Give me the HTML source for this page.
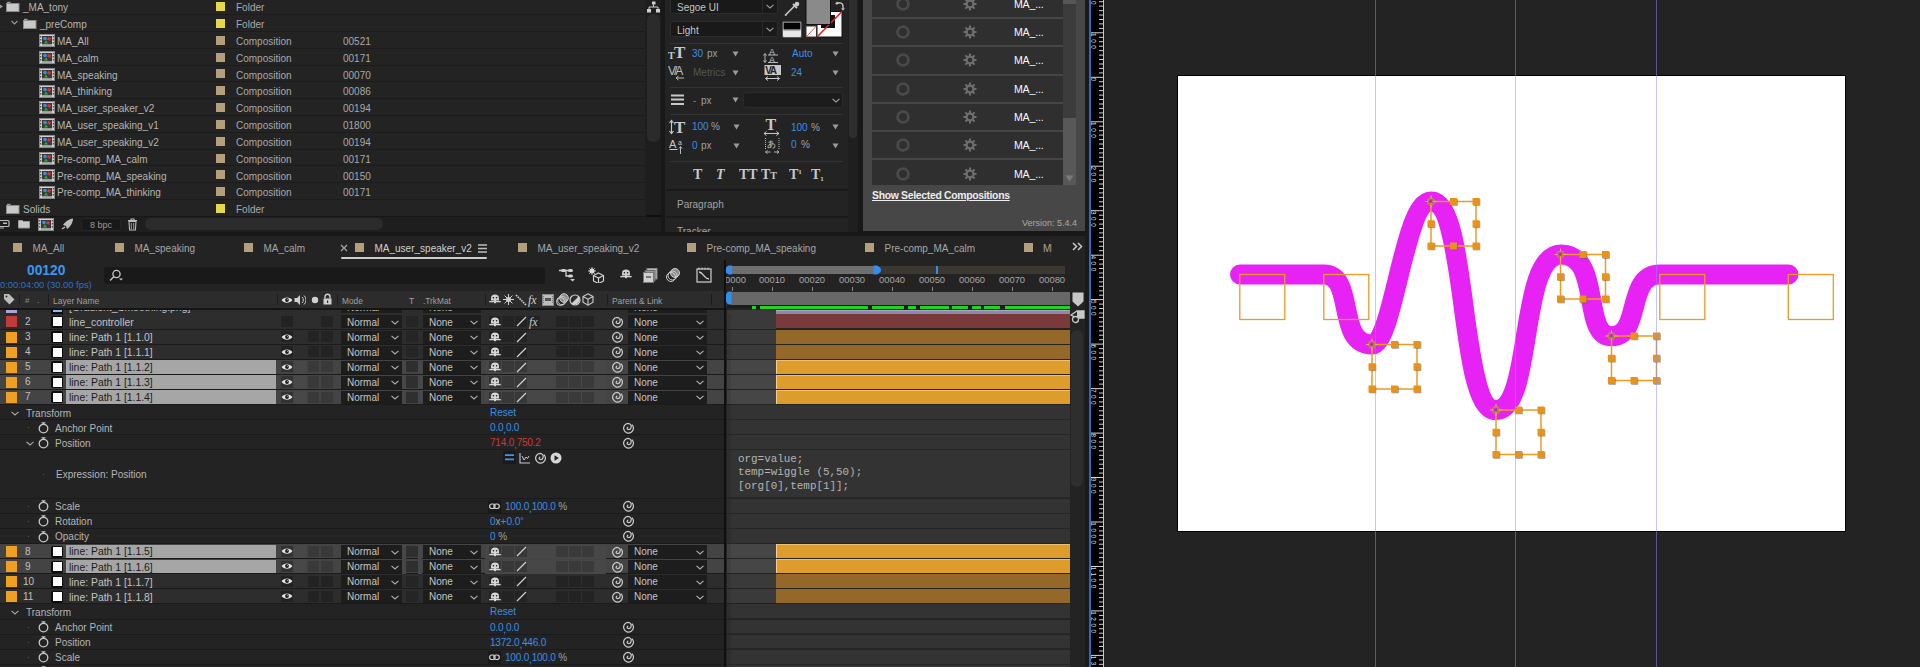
<!DOCTYPE html>
<html><head><meta charset="utf-8"><style>
html,body{margin:0;padding:0;}
body{width:1920px;height:667px;overflow:hidden;background:#232323;position:relative;font-family:"Liberation Sans",sans-serif;}
div{position:absolute;}
</style></head><body>
<div style="left:0px;top:0px;width:646px;height:217px;background:#232323;"></div>
<div style="left:0px;top:14px;width:646px;height:1px;background:#1c1c1c;"></div>
<svg style="position:absolute;left:6px;top:1px;" width="14" height="12" viewBox="0 0 14 12"><rect x="0.5" y="2.5" width="12.5" height="8" fill="#c9c9c9" stroke="#8a8a8a" stroke-width="1"/><rect x="1" y="0.8" width="3.5" height="1.5" fill="#9a9a9a"/></svg>
<div style="left:23px;top:3.25px;font-size:10px;line-height:10px;color:#b4b4b4;font-weight:normal;font-family:'Liberation Sans', sans-serif;white-space:nowrap;">_MA_tony</div>
<div style="left:216px;top:2px;width:9px;height:9px;background:#e6d84a;"></div>
<div style="left:236px;top:3.25px;font-size:10px;line-height:10px;color:#a8a8a8;font-weight:normal;font-family:'Liberation Sans', sans-serif;white-space:nowrap;">Folder</div>
<div style="left:0px;top:31px;width:646px;height:1px;background:#1c1c1c;"></div>
<svg style="position:absolute;left:23px;top:18px;" width="14" height="12" viewBox="0 0 14 12"><rect x="0.5" y="2.5" width="12.5" height="8" fill="#c9c9c9" stroke="#8a8a8a" stroke-width="1"/><rect x="1" y="0.8" width="3.5" height="1.5" fill="#9a9a9a"/></svg>
<div style="left:40px;top:20.08px;font-size:10px;line-height:10px;color:#b4b4b4;font-weight:normal;font-family:'Liberation Sans', sans-serif;white-space:nowrap;">_preComp</div>
<div style="left:216px;top:19px;width:9px;height:9px;background:#e6d84a;"></div>
<div style="left:236px;top:20.08px;font-size:10px;line-height:10px;color:#a8a8a8;font-weight:normal;font-family:'Liberation Sans', sans-serif;white-space:nowrap;">Folder</div>
<div style="left:0px;top:48px;width:646px;height:1px;background:#1c1c1c;"></div>
<svg style="position:absolute;left:39px;top:34px;" width="16" height="13" viewBox="0 0 16 13"><rect x="0.5" y="0.5" width="15" height="12" fill="#cfcfcf" stroke="#8a8a8a"/><rect x="3" y="2" width="10" height="8" fill="#3a3a3a"/><rect x="1" y="2" width="1.3" height="1.5" fill="#555"/><rect x="1" y="5" width="1.3" height="1.5" fill="#555"/><rect x="1" y="8" width="1.3" height="1.5" fill="#555"/><rect x="13.7" y="2" width="1.3" height="1.5" fill="#555"/><rect x="13.7" y="5" width="1.3" height="1.5" fill="#555"/><rect x="13.7" y="8" width="1.3" height="1.5" fill="#555"/><circle cx="6" cy="4.5" r="1.8" fill="#3b8ee8"/><rect x="8.5" y="3.3" width="3.2" height="3" fill="#e03030" transform="rotate(20 10 4.8)"/><path d="M5 9.5l2-3.2 2 3.2z" fill="#20b030"/><rect x="3" y="10.3" width="10" height="1.2" fill="#888"/></svg>
<div style="left:57px;top:36.91px;font-size:10px;line-height:10px;color:#b4b4b4;font-weight:normal;font-family:'Liberation Sans', sans-serif;white-space:nowrap;">MA_All</div>
<div style="left:216px;top:36px;width:9px;height:9px;background:#b49f7c;"></div>
<div style="left:236px;top:36.91px;font-size:10px;line-height:10px;color:#a8a8a8;font-weight:normal;font-family:'Liberation Sans', sans-serif;white-space:nowrap;">Composition</div>
<div style="left:343px;top:36.91px;font-size:10px;line-height:10px;color:#a8a8a8;font-weight:normal;font-family:'Liberation Sans', sans-serif;white-space:nowrap;">00521</div>
<div style="left:0px;top:65px;width:646px;height:1px;background:#1c1c1c;"></div>
<svg style="position:absolute;left:39px;top:51px;" width="16" height="13" viewBox="0 0 16 13"><rect x="0.5" y="0.5" width="15" height="12" fill="#cfcfcf" stroke="#8a8a8a"/><rect x="3" y="2" width="10" height="8" fill="#3a3a3a"/><rect x="1" y="2" width="1.3" height="1.5" fill="#555"/><rect x="1" y="5" width="1.3" height="1.5" fill="#555"/><rect x="1" y="8" width="1.3" height="1.5" fill="#555"/><rect x="13.7" y="2" width="1.3" height="1.5" fill="#555"/><rect x="13.7" y="5" width="1.3" height="1.5" fill="#555"/><rect x="13.7" y="8" width="1.3" height="1.5" fill="#555"/><circle cx="6" cy="4.5" r="1.8" fill="#3b8ee8"/><rect x="8.5" y="3.3" width="3.2" height="3" fill="#e03030" transform="rotate(20 10 4.8)"/><path d="M5 9.5l2-3.2 2 3.2z" fill="#20b030"/><rect x="3" y="10.3" width="10" height="1.2" fill="#888"/></svg>
<div style="left:57px;top:53.74px;font-size:10px;line-height:10px;color:#b4b4b4;font-weight:normal;font-family:'Liberation Sans', sans-serif;white-space:nowrap;">MA_calm</div>
<div style="left:216px;top:53px;width:9px;height:9px;background:#b49f7c;"></div>
<div style="left:236px;top:53.74px;font-size:10px;line-height:10px;color:#a8a8a8;font-weight:normal;font-family:'Liberation Sans', sans-serif;white-space:nowrap;">Composition</div>
<div style="left:343px;top:53.74px;font-size:10px;line-height:10px;color:#a8a8a8;font-weight:normal;font-family:'Liberation Sans', sans-serif;white-space:nowrap;">00171</div>
<div style="left:0px;top:81px;width:646px;height:1px;background:#1c1c1c;"></div>
<svg style="position:absolute;left:39px;top:68px;" width="16" height="13" viewBox="0 0 16 13"><rect x="0.5" y="0.5" width="15" height="12" fill="#cfcfcf" stroke="#8a8a8a"/><rect x="3" y="2" width="10" height="8" fill="#3a3a3a"/><rect x="1" y="2" width="1.3" height="1.5" fill="#555"/><rect x="1" y="5" width="1.3" height="1.5" fill="#555"/><rect x="1" y="8" width="1.3" height="1.5" fill="#555"/><rect x="13.7" y="2" width="1.3" height="1.5" fill="#555"/><rect x="13.7" y="5" width="1.3" height="1.5" fill="#555"/><rect x="13.7" y="8" width="1.3" height="1.5" fill="#555"/><circle cx="6" cy="4.5" r="1.8" fill="#3b8ee8"/><rect x="8.5" y="3.3" width="3.2" height="3" fill="#e03030" transform="rotate(20 10 4.8)"/><path d="M5 9.5l2-3.2 2 3.2z" fill="#20b030"/><rect x="3" y="10.3" width="10" height="1.2" fill="#888"/></svg>
<div style="left:57px;top:70.57px;font-size:10px;line-height:10px;color:#b4b4b4;font-weight:normal;font-family:'Liberation Sans', sans-serif;white-space:nowrap;">MA_speaking</div>
<div style="left:216px;top:69px;width:9px;height:9px;background:#b49f7c;"></div>
<div style="left:236px;top:70.57px;font-size:10px;line-height:10px;color:#a8a8a8;font-weight:normal;font-family:'Liberation Sans', sans-serif;white-space:nowrap;">Composition</div>
<div style="left:343px;top:70.57px;font-size:10px;line-height:10px;color:#a8a8a8;font-weight:normal;font-family:'Liberation Sans', sans-serif;white-space:nowrap;">00070</div>
<div style="left:0px;top:98px;width:646px;height:1px;background:#1c1c1c;"></div>
<svg style="position:absolute;left:39px;top:85px;" width="16" height="13" viewBox="0 0 16 13"><rect x="0.5" y="0.5" width="15" height="12" fill="#cfcfcf" stroke="#8a8a8a"/><rect x="3" y="2" width="10" height="8" fill="#3a3a3a"/><rect x="1" y="2" width="1.3" height="1.5" fill="#555"/><rect x="1" y="5" width="1.3" height="1.5" fill="#555"/><rect x="1" y="8" width="1.3" height="1.5" fill="#555"/><rect x="13.7" y="2" width="1.3" height="1.5" fill="#555"/><rect x="13.7" y="5" width="1.3" height="1.5" fill="#555"/><rect x="13.7" y="8" width="1.3" height="1.5" fill="#555"/><circle cx="6" cy="4.5" r="1.8" fill="#3b8ee8"/><rect x="8.5" y="3.3" width="3.2" height="3" fill="#e03030" transform="rotate(20 10 4.8)"/><path d="M5 9.5l2-3.2 2 3.2z" fill="#20b030"/><rect x="3" y="10.3" width="10" height="1.2" fill="#888"/></svg>
<div style="left:57px;top:87.40px;font-size:10px;line-height:10px;color:#b4b4b4;font-weight:normal;font-family:'Liberation Sans', sans-serif;white-space:nowrap;">MA_thinking</div>
<div style="left:216px;top:86px;width:9px;height:9px;background:#b49f7c;"></div>
<div style="left:236px;top:87.40px;font-size:10px;line-height:10px;color:#a8a8a8;font-weight:normal;font-family:'Liberation Sans', sans-serif;white-space:nowrap;">Composition</div>
<div style="left:343px;top:87.40px;font-size:10px;line-height:10px;color:#a8a8a8;font-weight:normal;font-family:'Liberation Sans', sans-serif;white-space:nowrap;">00086</div>
<div style="left:0px;top:115px;width:646px;height:1px;background:#1c1c1c;"></div>
<svg style="position:absolute;left:39px;top:101px;" width="16" height="13" viewBox="0 0 16 13"><rect x="0.5" y="0.5" width="15" height="12" fill="#cfcfcf" stroke="#8a8a8a"/><rect x="3" y="2" width="10" height="8" fill="#3a3a3a"/><rect x="1" y="2" width="1.3" height="1.5" fill="#555"/><rect x="1" y="5" width="1.3" height="1.5" fill="#555"/><rect x="1" y="8" width="1.3" height="1.5" fill="#555"/><rect x="13.7" y="2" width="1.3" height="1.5" fill="#555"/><rect x="13.7" y="5" width="1.3" height="1.5" fill="#555"/><rect x="13.7" y="8" width="1.3" height="1.5" fill="#555"/><circle cx="6" cy="4.5" r="1.8" fill="#3b8ee8"/><rect x="8.5" y="3.3" width="3.2" height="3" fill="#e03030" transform="rotate(20 10 4.8)"/><path d="M5 9.5l2-3.2 2 3.2z" fill="#20b030"/><rect x="3" y="10.3" width="10" height="1.2" fill="#888"/></svg>
<div style="left:57px;top:104.23px;font-size:10px;line-height:10px;color:#b4b4b4;font-weight:normal;font-family:'Liberation Sans', sans-serif;white-space:nowrap;">MA_user_speaker_v2</div>
<div style="left:216px;top:103px;width:9px;height:9px;background:#b49f7c;"></div>
<div style="left:236px;top:104.23px;font-size:10px;line-height:10px;color:#a8a8a8;font-weight:normal;font-family:'Liberation Sans', sans-serif;white-space:nowrap;">Composition</div>
<div style="left:343px;top:104.23px;font-size:10px;line-height:10px;color:#a8a8a8;font-weight:normal;font-family:'Liberation Sans', sans-serif;white-space:nowrap;">00194</div>
<div style="left:0px;top:132px;width:646px;height:1px;background:#1c1c1c;"></div>
<svg style="position:absolute;left:39px;top:118px;" width="16" height="13" viewBox="0 0 16 13"><rect x="0.5" y="0.5" width="15" height="12" fill="#cfcfcf" stroke="#8a8a8a"/><rect x="3" y="2" width="10" height="8" fill="#3a3a3a"/><rect x="1" y="2" width="1.3" height="1.5" fill="#555"/><rect x="1" y="5" width="1.3" height="1.5" fill="#555"/><rect x="1" y="8" width="1.3" height="1.5" fill="#555"/><rect x="13.7" y="2" width="1.3" height="1.5" fill="#555"/><rect x="13.7" y="5" width="1.3" height="1.5" fill="#555"/><rect x="13.7" y="8" width="1.3" height="1.5" fill="#555"/><circle cx="6" cy="4.5" r="1.8" fill="#3b8ee8"/><rect x="8.5" y="3.3" width="3.2" height="3" fill="#e03030" transform="rotate(20 10 4.8)"/><path d="M5 9.5l2-3.2 2 3.2z" fill="#20b030"/><rect x="3" y="10.3" width="10" height="1.2" fill="#888"/></svg>
<div style="left:57px;top:121.06px;font-size:10px;line-height:10px;color:#b4b4b4;font-weight:normal;font-family:'Liberation Sans', sans-serif;white-space:nowrap;">MA_user_speaking_v1</div>
<div style="left:216px;top:120px;width:9px;height:9px;background:#b49f7c;"></div>
<div style="left:236px;top:121.06px;font-size:10px;line-height:10px;color:#a8a8a8;font-weight:normal;font-family:'Liberation Sans', sans-serif;white-space:nowrap;">Composition</div>
<div style="left:343px;top:121.06px;font-size:10px;line-height:10px;color:#a8a8a8;font-weight:normal;font-family:'Liberation Sans', sans-serif;white-space:nowrap;">01800</div>
<div style="left:0px;top:149px;width:646px;height:1px;background:#1c1c1c;"></div>
<svg style="position:absolute;left:39px;top:135px;" width="16" height="13" viewBox="0 0 16 13"><rect x="0.5" y="0.5" width="15" height="12" fill="#cfcfcf" stroke="#8a8a8a"/><rect x="3" y="2" width="10" height="8" fill="#3a3a3a"/><rect x="1" y="2" width="1.3" height="1.5" fill="#555"/><rect x="1" y="5" width="1.3" height="1.5" fill="#555"/><rect x="1" y="8" width="1.3" height="1.5" fill="#555"/><rect x="13.7" y="2" width="1.3" height="1.5" fill="#555"/><rect x="13.7" y="5" width="1.3" height="1.5" fill="#555"/><rect x="13.7" y="8" width="1.3" height="1.5" fill="#555"/><circle cx="6" cy="4.5" r="1.8" fill="#3b8ee8"/><rect x="8.5" y="3.3" width="3.2" height="3" fill="#e03030" transform="rotate(20 10 4.8)"/><path d="M5 9.5l2-3.2 2 3.2z" fill="#20b030"/><rect x="3" y="10.3" width="10" height="1.2" fill="#888"/></svg>
<div style="left:57px;top:137.89px;font-size:10px;line-height:10px;color:#b4b4b4;font-weight:normal;font-family:'Liberation Sans', sans-serif;white-space:nowrap;">MA_user_speaking_v2</div>
<div style="left:216px;top:137px;width:9px;height:9px;background:#b49f7c;"></div>
<div style="left:236px;top:137.89px;font-size:10px;line-height:10px;color:#a8a8a8;font-weight:normal;font-family:'Liberation Sans', sans-serif;white-space:nowrap;">Composition</div>
<div style="left:343px;top:137.89px;font-size:10px;line-height:10px;color:#a8a8a8;font-weight:normal;font-family:'Liberation Sans', sans-serif;white-space:nowrap;">00194</div>
<div style="left:0px;top:165px;width:646px;height:1px;background:#1c1c1c;"></div>
<svg style="position:absolute;left:39px;top:152px;" width="16" height="13" viewBox="0 0 16 13"><rect x="0.5" y="0.5" width="15" height="12" fill="#cfcfcf" stroke="#8a8a8a"/><rect x="3" y="2" width="10" height="8" fill="#3a3a3a"/><rect x="1" y="2" width="1.3" height="1.5" fill="#555"/><rect x="1" y="5" width="1.3" height="1.5" fill="#555"/><rect x="1" y="8" width="1.3" height="1.5" fill="#555"/><rect x="13.7" y="2" width="1.3" height="1.5" fill="#555"/><rect x="13.7" y="5" width="1.3" height="1.5" fill="#555"/><rect x="13.7" y="8" width="1.3" height="1.5" fill="#555"/><circle cx="6" cy="4.5" r="1.8" fill="#3b8ee8"/><rect x="8.5" y="3.3" width="3.2" height="3" fill="#e03030" transform="rotate(20 10 4.8)"/><path d="M5 9.5l2-3.2 2 3.2z" fill="#20b030"/><rect x="3" y="10.3" width="10" height="1.2" fill="#888"/></svg>
<div style="left:57px;top:154.72px;font-size:10px;line-height:10px;color:#b4b4b4;font-weight:normal;font-family:'Liberation Sans', sans-serif;white-space:nowrap;">Pre-comp_MA_calm</div>
<div style="left:216px;top:154px;width:9px;height:9px;background:#b49f7c;"></div>
<div style="left:236px;top:154.72px;font-size:10px;line-height:10px;color:#a8a8a8;font-weight:normal;font-family:'Liberation Sans', sans-serif;white-space:nowrap;">Composition</div>
<div style="left:343px;top:154.72px;font-size:10px;line-height:10px;color:#a8a8a8;font-weight:normal;font-family:'Liberation Sans', sans-serif;white-space:nowrap;">00171</div>
<div style="left:0px;top:182px;width:646px;height:1px;background:#1c1c1c;"></div>
<svg style="position:absolute;left:39px;top:169px;" width="16" height="13" viewBox="0 0 16 13"><rect x="0.5" y="0.5" width="15" height="12" fill="#cfcfcf" stroke="#8a8a8a"/><rect x="3" y="2" width="10" height="8" fill="#3a3a3a"/><rect x="1" y="2" width="1.3" height="1.5" fill="#555"/><rect x="1" y="5" width="1.3" height="1.5" fill="#555"/><rect x="1" y="8" width="1.3" height="1.5" fill="#555"/><rect x="13.7" y="2" width="1.3" height="1.5" fill="#555"/><rect x="13.7" y="5" width="1.3" height="1.5" fill="#555"/><rect x="13.7" y="8" width="1.3" height="1.5" fill="#555"/><circle cx="6" cy="4.5" r="1.8" fill="#3b8ee8"/><rect x="8.5" y="3.3" width="3.2" height="3" fill="#e03030" transform="rotate(20 10 4.8)"/><path d="M5 9.5l2-3.2 2 3.2z" fill="#20b030"/><rect x="3" y="10.3" width="10" height="1.2" fill="#888"/></svg>
<div style="left:57px;top:171.55px;font-size:10px;line-height:10px;color:#b4b4b4;font-weight:normal;font-family:'Liberation Sans', sans-serif;white-space:nowrap;">Pre-comp_MA_speaking</div>
<div style="left:216px;top:170px;width:9px;height:9px;background:#b49f7c;"></div>
<div style="left:236px;top:171.55px;font-size:10px;line-height:10px;color:#a8a8a8;font-weight:normal;font-family:'Liberation Sans', sans-serif;white-space:nowrap;">Composition</div>
<div style="left:343px;top:171.55px;font-size:10px;line-height:10px;color:#a8a8a8;font-weight:normal;font-family:'Liberation Sans', sans-serif;white-space:nowrap;">00150</div>
<div style="left:0px;top:199px;width:646px;height:1px;background:#1c1c1c;"></div>
<svg style="position:absolute;left:39px;top:186px;" width="16" height="13" viewBox="0 0 16 13"><rect x="0.5" y="0.5" width="15" height="12" fill="#cfcfcf" stroke="#8a8a8a"/><rect x="3" y="2" width="10" height="8" fill="#3a3a3a"/><rect x="1" y="2" width="1.3" height="1.5" fill="#555"/><rect x="1" y="5" width="1.3" height="1.5" fill="#555"/><rect x="1" y="8" width="1.3" height="1.5" fill="#555"/><rect x="13.7" y="2" width="1.3" height="1.5" fill="#555"/><rect x="13.7" y="5" width="1.3" height="1.5" fill="#555"/><rect x="13.7" y="8" width="1.3" height="1.5" fill="#555"/><circle cx="6" cy="4.5" r="1.8" fill="#3b8ee8"/><rect x="8.5" y="3.3" width="3.2" height="3" fill="#e03030" transform="rotate(20 10 4.8)"/><path d="M5 9.5l2-3.2 2 3.2z" fill="#20b030"/><rect x="3" y="10.3" width="10" height="1.2" fill="#888"/></svg>
<div style="left:57px;top:188.38px;font-size:10px;line-height:10px;color:#b4b4b4;font-weight:normal;font-family:'Liberation Sans', sans-serif;white-space:nowrap;">Pre-comp_MA_thinking</div>
<div style="left:216px;top:187px;width:9px;height:9px;background:#b49f7c;"></div>
<div style="left:236px;top:188.38px;font-size:10px;line-height:10px;color:#a8a8a8;font-weight:normal;font-family:'Liberation Sans', sans-serif;white-space:nowrap;">Composition</div>
<div style="left:343px;top:188.38px;font-size:10px;line-height:10px;color:#a8a8a8;font-weight:normal;font-family:'Liberation Sans', sans-serif;white-space:nowrap;">00171</div>
<div style="left:0px;top:216px;width:646px;height:1px;background:#1c1c1c;"></div>
<svg style="position:absolute;left:6px;top:203px;" width="14" height="12" viewBox="0 0 14 12"><rect x="0.5" y="2.5" width="12.5" height="8" fill="#c9c9c9" stroke="#8a8a8a" stroke-width="1"/><rect x="1" y="0.8" width="3.5" height="1.5" fill="#9a9a9a"/></svg>
<div style="left:23px;top:205.21px;font-size:10px;line-height:10px;color:#b4b4b4;font-weight:normal;font-family:'Liberation Sans', sans-serif;white-space:nowrap;">Solids</div>
<div style="left:216px;top:204px;width:9px;height:9px;background:#e6d84a;"></div>
<div style="left:236px;top:205.21px;font-size:10px;line-height:10px;color:#a8a8a8;font-weight:normal;font-family:'Liberation Sans', sans-serif;white-space:nowrap;">Folder</div>
<svg style="position:absolute;left:0px;top:4px;" width="4" height="5" viewBox="0 0 4 5"><path d="M0 0.5l3 2-3 2z" fill="#999"/></svg>
<svg style="position:absolute;left:11px;top:20px;" width="8" height="6" viewBox="0 0 8 6"><path d="M0.5 1l3 3 3-3" fill="none" stroke="#9a9a9a" stroke-width="1.1"/></svg>
<div style="left:0px;top:216px;width:646px;height:16px;background:#1e1e1e;"></div>
<div style="left:0px;top:216px;width:646px;height:1px;background:#171717;"></div>
<svg style="position:absolute;left:0px;top:219px;" width="10" height="11" viewBox="0 0 10 11"><rect x="-3" y="1.5" width="12" height="6" rx="1" fill="none" stroke="#bbb" stroke-width="1.2"/><rect x="3" y="3.5" width="4" height="1.5" fill="#bbb"/><path d="M0 9h4" stroke="#aaa"/></svg>
<svg style="position:absolute;left:18px;top:218px;" width="12" height="11" viewBox="0 0 12 11"><path d="M0.5 2.5h4l1 1h6v6.5h-11z" fill="#c9c9c9" stroke="#999"/></svg>
<svg style="position:absolute;left:38px;top:218px;" width="16" height="13" viewBox="0 0 16 13"><rect x="0.5" y="0.5" width="15" height="12" fill="#cfcfcf" stroke="#8a8a8a"/><rect x="3" y="2" width="10" height="8" fill="#3a3a3a"/><rect x="1" y="2" width="1.3" height="1.5" fill="#555"/><rect x="1" y="5" width="1.3" height="1.5" fill="#555"/><rect x="1" y="8" width="1.3" height="1.5" fill="#555"/><rect x="13.7" y="2" width="1.3" height="1.5" fill="#555"/><rect x="13.7" y="5" width="1.3" height="1.5" fill="#555"/><rect x="13.7" y="8" width="1.3" height="1.5" fill="#555"/><circle cx="6" cy="4.5" r="1.8" fill="#3b8ee8"/><rect x="8.5" y="3.3" width="3.2" height="3" fill="#e03030" transform="rotate(20 10 4.8)"/><path d="M5 9.5l2-3.2 2 3.2z" fill="#20b030"/><rect x="3" y="10.3" width="10" height="1.2" fill="#888"/></svg>
<svg style="position:absolute;left:61px;top:218px;" width="13" height="13" viewBox="0 0 13 13"><path d="M12 0.5C8 1 4 4 2 7l3 1 1 3c3-2 6-6 6-10.5z" fill="#bdbdbd"/><path d="M1 11l3-2" stroke="#bdbdbd" stroke-width="1.5"/></svg>
<div style="left:81px;top:218px;width:40px;height:13px;background:#181818;border-radius:3px;border:1px solid #262626;box-sizing:border-box;"></div>
<div style="left:90px;top:220.58px;font-size:9px;line-height:9px;color:#9a9a9a;font-weight:normal;font-family:'Liberation Sans', sans-serif;white-space:nowrap;">8 bpc</div>
<svg style="position:absolute;left:127px;top:218px;" width="11" height="13" viewBox="0 0 11 13"><path d="M1 2.5h9M4 2.5V1h3v1.5" fill="none" stroke="#bbb" stroke-width="1.1"/><path d="M2 3.5h7l-0.6 8.5h-5.8z" fill="none" stroke="#bbb" stroke-width="1.1"/><path d="M4.3 5v6M6.7 5v6" stroke="#aaa" stroke-width="0.9"/></svg>
<div style="left:145px;top:218px;width:238px;height:12px;background:#2c2c2c;border-radius:6px;"></div>
<div style="left:645px;top:0px;width:16px;height:232px;background:#1e1e1e;"></div>
<div style="left:647px;top:14px;width:13px;height:128px;background:#2b2b2b;border-radius:6px;"></div>
<div style="left:646px;top:215px;width:15px;height:2px;background:#0f0f0f;"></div>
<svg style="position:absolute;left:647px;top:1px;" width="13" height="12" viewBox="0 0 13 12"><rect x="5" y="0.5" width="3.5" height="3" fill="#d0d0d0"/><path d="M6.5 3.5v2.5M2 6h9M2 6v2M11 6v2" stroke="#d0d0d0" stroke-width="1"/><rect x="0" y="8" width="4" height="3.5" fill="#d0d0d0"/><rect x="9" y="8" width="4" height="3.5" fill="#d0d0d0"/></svg>
<div style="left:661px;top:0px;width:4px;height:236px;background:#181818;"></div>
<div style="left:665px;top:0px;width:183px;height:232px;background:#232323;"></div>
<div style="left:670px;top:-2px;width:108px;height:16px;background:#191919;border:1px solid #2c2c2c;border-radius:3px;box-sizing:border-box;"></div>
<div style="left:762px;top:-1px;width:1px;height:14px;background:#2a2a2a;"></div>
<div style="left:677px;top:3.04px;font-size:10px;line-height:10px;color:#c4c4c4;font-weight:normal;font-family:'Liberation Sans', sans-serif;white-space:nowrap;">Segoe UI</div>
<svg style="position:absolute;left:766px;top:4px;" width="8" height="5" viewBox="0 0 8 5"><path d="M0.5 0.8l3.5 3.2 3.5-3.2" fill="none" stroke="#a0a0a0" stroke-width="1.1"/></svg>
<div style="left:670px;top:21px;width:108px;height:16px;background:#191919;border:1px solid #2c2c2c;border-radius:3px;box-sizing:border-box;"></div>
<div style="left:762px;top:22px;width:1px;height:14px;background:#2a2a2a;"></div>
<div style="left:677px;top:26.04px;font-size:10px;line-height:10px;color:#c4c4c4;font-weight:normal;font-family:'Liberation Sans', sans-serif;white-space:nowrap;">Light</div>
<svg style="position:absolute;left:766px;top:27px;" width="8" height="5" viewBox="0 0 8 5"><path d="M0.5 0.8l3.5 3.2 3.5-3.2" fill="none" stroke="#a0a0a0" stroke-width="1.1"/></svg>
<svg style="position:absolute;left:783px;top:1px;" width="18" height="16" viewBox="0 0 18 16"><path d="M2 14.5l1.5-1.5 8-8" fill="none" stroke="#c9c9c9" stroke-width="1.6"/><path d="M3 13.5l-0.5 1.5 1.5-0.5z" fill="#c9c9c9"/><path d="M10 3l4 4" stroke="#c9c9c9" stroke-width="2"/><circle cx="14" cy="3" r="2.3" fill="#c9c9c9"/></svg>
<svg style="position:absolute;left:782px;top:21px;" width="20" height="17" viewBox="0 0 20 17"><rect x="0.5" y="0.5" width="19" height="16" rx="1.5" fill="#e8e8e8" stroke="#555"/><rect x="1.5" y="1.5" width="17" height="6.5" fill="#050505"/><rect x="1.5" y="8" width="17" height="1.5" fill="#777"/></svg>
<svg style="position:absolute;left:805px;top:-1px;" width="40" height="40" viewBox="0 0 40 40"><rect x="12" y="12.5" width="25" height="25.5" fill="#fff" stroke="#111"/><rect x="16" y="16" width="14" height="13" fill="#111"/><path d="M12.5 37.5L37 12.5" stroke="#e02020" stroke-width="1.6"/><rect x="1" y="0" width="24.5" height="25.5" fill="#8a8a8a" stroke="#111"/><rect x="1" y="27" width="10.5" height="11" fill="#fff" stroke="#333"/><path d="M1.5 37.5L11 27.5" stroke="#e03030" stroke-width="0.8"/></svg>
<svg style="position:absolute;left:835px;top:0px;" width="10" height="11" viewBox="0 0 10 11"><path d="M1.5 4.5a3.5 3.5 0 0 1 6.5 1.5v3" fill="none" stroke="#c9c9c9" stroke-width="1.3"/><path d="M0 4l2-2.5 2 2.5z" fill="#c9c9c9"/><path d="M6 8.5h4l-2 2z" fill="#c9c9c9"/></svg>
<div style="left:670px;top:43px;width:173px;height:1px;background:#333333;"></div>
<div style="left:670px;top:87px;width:173px;height:1px;background:#333333;"></div>
<div style="left:670px;top:114px;width:173px;height:1px;background:#333333;"></div>
<div style="left:670px;top:161px;width:173px;height:1px;background:#333333;"></div>
<svg style="position:absolute;left:668px;top:45px;" width="20" height="16" viewBox="0 0 20 16"><text x="0" y="14" font-family="Liberation Serif" font-weight="bold" font-size="10" fill="#c8c8c8">T</text><text x="6" y="13" font-family="Liberation Serif" font-weight="bold" font-size="17" fill="#c8c8c8">T</text></svg>
<div style="left:692px;top:49.03px;font-size:10px;line-height:10px;color:#3a8ee6;font-weight:normal;font-family:'Liberation Sans', sans-serif;white-space:nowrap;">30</div>
<div style="left:707px;top:49.03px;font-size:10px;line-height:10px;color:#a0a0a0;font-weight:normal;font-family:'Liberation Sans', sans-serif;white-space:nowrap;">px</div>
<svg style="position:absolute;left:732px;top:51px;" width="7" height="6" viewBox="0 0 7 6"><path d="M0.5 0.5h6l-3 5z" fill="#9a9a9a"/></svg>
<svg style="position:absolute;left:763px;top:46px;" width="17" height="17" viewBox="0 0 17 17"><text x="6" y="9" font-family="Liberation Sans" font-size="9" fill="#c8c8c8">A</text><text x="6" y="17" font-family="Liberation Sans" font-size="9" fill="#c8c8c8">A</text><path d="M2 8v8M0.5 9.5l1.5-2 1.5 2M0.5 14.5l1.5 2 1.5-2" fill="none" stroke="#c8c8c8" stroke-width="0.9"/><path d="M5 9h10M5 16.5h10" stroke="#c8c8c8" stroke-width="0.9"/></svg>
<div style="left:792px;top:49.03px;font-size:10px;line-height:10px;color:#3a8ee6;font-weight:normal;font-family:'Liberation Sans', sans-serif;white-space:nowrap;">Auto</div>
<svg style="position:absolute;left:832px;top:51px;" width="7" height="6" viewBox="0 0 7 6"><path d="M0.5 0.5h6l-3 5z" fill="#9a9a9a"/></svg>
<svg style="position:absolute;left:668px;top:64px;" width="18" height="17" viewBox="0 0 18 17"><text x="0" y="11" font-family="Liberation Sans" font-size="12" fill="#bdbdbd" letter-spacing="-2">V/A</text><path d="M8 14h8M8 14l2.5-2M8 14l2.5 2" fill="none" stroke="#bdbdbd" stroke-width="1"/></svg>
<div style="left:693px;top:68.03px;font-size:10px;line-height:10px;color:#555555;font-weight:normal;font-family:'Liberation Sans', sans-serif;white-space:nowrap;">Metrics</div>
<svg style="position:absolute;left:732px;top:70px;" width="7" height="6" viewBox="0 0 7 6"><path d="M0.5 0.5h6l-3 5z" fill="#9a9a9a"/></svg>
<svg style="position:absolute;left:764px;top:64px;" width="18" height="17" viewBox="0 0 18 17"><rect x="0.5" y="1" width="16.5" height="10" fill="#c8c8c8"/><text x="1.3" y="10" font-family="Liberation Sans" font-weight="bold" font-size="10" fill="#232323" letter-spacing="-1.5">VA</text><path d="M1.5 14.5h14M1.5 14.5l2.5-2M1.5 14.5l2.5 2M15.5 14.5l-2.5-2M15.5 14.5l-2.5 2" fill="none" stroke="#c8c8c8" stroke-width="1"/></svg>
<div style="left:791px;top:67.53px;font-size:10px;line-height:10px;color:#3a8ee6;font-weight:normal;font-family:'Liberation Sans', sans-serif;white-space:nowrap;">24</div>
<svg style="position:absolute;left:832px;top:70px;" width="7" height="6" viewBox="0 0 7 6"><path d="M0.5 0.5h6l-3 5z" fill="#9a9a9a"/></svg>
<svg style="position:absolute;left:671px;top:94px;" width="14" height="12" viewBox="0 0 14 12"><path d="M0 1.5h13M0 5.5h13M0 10h13" stroke="#c8c8c8" stroke-width="1.8"/></svg>
<div style="left:693px;top:95.53px;font-size:10px;line-height:10px;color:#3a8ee6;font-weight:normal;font-family:'Liberation Sans', sans-serif;white-space:nowrap;">-</div>
<div style="left:701px;top:95.53px;font-size:10px;line-height:10px;color:#a0a0a0;font-weight:normal;font-family:'Liberation Sans', sans-serif;white-space:nowrap;">px</div>
<svg style="position:absolute;left:732px;top:97px;" width="7" height="6" viewBox="0 0 7 6"><path d="M0.5 0.5h6l-3 5z" fill="#9a9a9a"/></svg>
<div style="left:743px;top:92px;width:100px;height:16px;background:#1c1c1c;border:1px solid #2a2a2a;border-radius:3px;box-sizing:border-box;"></div>
<svg style="position:absolute;left:832px;top:98px;" width="8" height="5" viewBox="0 0 8 5"><path d="M0.5 0.8l3.5 3.2 3.5-3.2" fill="none" stroke="#a0a0a0" stroke-width="1.1"/></svg>
<svg style="position:absolute;left:669px;top:119px;" width="19" height="16" viewBox="0 0 19 16"><path d="M2.5 1.5v13M0.5 4l2-2.5 2 2.5M0.5 12l2 2.5 2-2.5" fill="none" stroke="#c8c8c8" stroke-width="1.1"/><text x="5" y="14" font-family="Liberation Serif" font-weight="bold" font-size="17" fill="#c8c8c8">T</text></svg>
<div style="left:692px;top:122.03px;font-size:10px;line-height:10px;color:#3a8ee6;font-weight:normal;font-family:'Liberation Sans', sans-serif;white-space:nowrap;">100</div>
<div style="left:711px;top:122.03px;font-size:10px;line-height:10px;color:#a0a0a0;font-weight:normal;font-family:'Liberation Sans', sans-serif;white-space:nowrap;">%</div>
<svg style="position:absolute;left:733px;top:124px;" width="7" height="6" viewBox="0 0 7 6"><path d="M0.5 0.5h6l-3 5z" fill="#9a9a9a"/></svg>
<svg style="position:absolute;left:763px;top:117px;" width="18" height="19" viewBox="0 0 18 19"><text x="2.5" y="13" font-family="Liberation Serif" font-weight="bold" font-size="16" fill="#c8c8c8">T</text><path d="M1 16.5h15M1 16.5l2.5-2M1 16.5l2.5 2M16 16.5l-2.5-2M16 16.5l-2.5 2" fill="none" stroke="#c8c8c8" stroke-width="1"/></svg>
<div style="left:791px;top:122.53px;font-size:10px;line-height:10px;color:#3a8ee6;font-weight:normal;font-family:'Liberation Sans', sans-serif;white-space:nowrap;">100</div>
<div style="left:811px;top:122.53px;font-size:10px;line-height:10px;color:#a0a0a0;font-weight:normal;font-family:'Liberation Sans', sans-serif;white-space:nowrap;">%</div>
<svg style="position:absolute;left:832px;top:124px;" width="7" height="6" viewBox="0 0 7 6"><path d="M0.5 0.5h6l-3 5z" fill="#9a9a9a"/></svg>
<svg style="position:absolute;left:669px;top:137px;" width="18" height="18" viewBox="0 0 18 18"><text x="0" y="11" font-family="Liberation Sans" font-size="11" fill="#c8c8c8">A</text><text x="9" y="8" font-family="Liberation Sans" font-size="7" fill="#c8c8c8">a</text><path d="M0.5 12.5h8" stroke="#c8c8c8"/><path d="M11.5 17v-7M10 11.5l1.5-2 1.5 2" fill="none" stroke="#c8c8c8" stroke-width="0.9"/></svg>
<div style="left:692px;top:140.53px;font-size:10px;line-height:10px;color:#3a8ee6;font-weight:normal;font-family:'Liberation Sans', sans-serif;white-space:nowrap;">0</div>
<div style="left:701px;top:140.53px;font-size:10px;line-height:10px;color:#a0a0a0;font-weight:normal;font-family:'Liberation Sans', sans-serif;white-space:nowrap;">px</div>
<svg style="position:absolute;left:733px;top:143px;" width="7" height="6" viewBox="0 0 7 6"><path d="M0.5 0.5h6l-3 5z" fill="#9a9a9a"/></svg>
<svg style="position:absolute;left:765px;top:137px;" width="15" height="18" viewBox="0 0 15 18"><path d="M0.5 1v11M14 1v11" stroke="#bbb" stroke-dasharray="1 1"/><text x="2" y="10" font-family="Liberation Sans" font-size="9" fill="#c8c8c8">&#12354;</text><path d="M0.5 15h5M0.5 15l2-1.5M0.5 15l2 1.5M9 15h5M14 15l-2-1.5M14 15l-2 1.5" fill="none" stroke="#bbb" stroke-width="0.9"/></svg>
<div style="left:791px;top:139.53px;font-size:10px;line-height:10px;color:#3a8ee6;font-weight:normal;font-family:'Liberation Sans', sans-serif;white-space:nowrap;">0</div>
<div style="left:801px;top:139.53px;font-size:10px;line-height:10px;color:#a0a0a0;font-weight:normal;font-family:'Liberation Sans', sans-serif;white-space:nowrap;">%</div>
<svg style="position:absolute;left:832px;top:143px;" width="7" height="6" viewBox="0 0 7 6"><path d="M0.5 0.5h6l-3 5z" fill="#9a9a9a"/></svg>
<svg style="position:absolute;left:693px;top:166px;" width="20" height="16" viewBox="0 0 20 16"><text x="0" y="13" font-family="Liberation Serif" font-weight="bold" font-size="14" fill="#c8c8c8">T</text></svg>
<svg style="position:absolute;left:716px;top:166px;" width="20" height="16" viewBox="0 0 20 16"><text x="0" y="13" font-family="Liberation Serif" font-weight="bold" font-size="14" fill="#c8c8c8"><tspan font-style='italic'>T</tspan></text></svg>
<svg style="position:absolute;left:739px;top:166px;" width="20" height="16" viewBox="0 0 20 16"><text x="0" y="13" font-family="Liberation Serif" font-weight="bold" font-size="14" fill="#c8c8c8">TT</text></svg>
<svg style="position:absolute;left:761px;top:166px;" width="20" height="16" viewBox="0 0 20 16"><text x="0" y="13" font-family="Liberation Serif" font-weight="bold" font-size="14" fill="#c8c8c8">T<tspan font-size='10'>T</tspan></text></svg>
<svg style="position:absolute;left:789px;top:166px;" width="20" height="16" viewBox="0 0 20 16"><text x="0" y="13" font-family="Liberation Serif" font-weight="bold" font-size="14" fill="#c8c8c8">T<tspan font-size='7' dy='-5'>1</tspan></text></svg>
<svg style="position:absolute;left:811px;top:166px;" width="20" height="16" viewBox="0 0 20 16"><text x="0" y="13" font-family="Liberation Serif" font-weight="bold" font-size="14" fill="#c8c8c8">T<tspan font-size='7' dy='2'>1</tspan></text></svg>
<div style="left:666px;top:189px;width:182px;height:2px;background:#1a1a1a;"></div>
<div style="left:677px;top:200.03px;font-size:10px;line-height:10px;color:#a4a4a4;font-weight:normal;font-family:'Liberation Sans', sans-serif;white-space:nowrap;">Paragraph</div>
<div style="left:666px;top:216px;width:182px;height:2px;background:#1a1a1a;"></div>
<div style="left:677px;top:227.03px;font-size:10px;line-height:10px;color:#a4a4a4;font-weight:normal;font-family:'Liberation Sans', sans-serif;white-space:nowrap;">Tracker</div>
<div style="left:848px;top:0px;width:10px;height:232px;background:#1f1f1f;"></div>
<div style="left:849px;top:0px;width:8px;height:138px;background:#2e2e2e;border-radius:0 0 4px 4px;"></div>
<div style="left:858px;top:0px;width:5px;height:236px;background:#181818;"></div>
<div style="left:863px;top:0px;width:222px;height:231px;background:#474747;"></div>
<div style="left:872px;top:0px;width:191px;height:185px;background:#2f2f2f;"></div>
<div style="left:872px;top:17px;width:191px;height:2px;background:#464646;"></div>
<div style="left:872px;top:45px;width:191px;height:2px;background:#464646;"></div>
<div style="left:872px;top:74px;width:191px;height:2px;background:#464646;"></div>
<div style="left:872px;top:102px;width:191px;height:2px;background:#464646;"></div>
<div style="left:872px;top:130px;width:191px;height:2px;background:#464646;"></div>
<div style="left:872px;top:158px;width:191px;height:2px;background:#464646;"></div>
<svg style="position:absolute;left:896px;top:-3px;" width="14" height="14" viewBox="0 0 14 14"><circle cx="7" cy="7" r="5.4" fill="none" stroke="#4a4a4a" stroke-width="2.8"/></svg>
<svg style="position:absolute;left:963px;top:-3px;" width="14" height="14" viewBox="0 0 14 14"><g fill="#6e6e6e"><circle cx="7" cy="7" r="4.6"/><rect x="6" y="0.5" width="2" height="3" transform="rotate(0 7 7)"/><rect x="6" y="0.5" width="2" height="3" transform="rotate(45 7 7)"/><rect x="6" y="0.5" width="2" height="3" transform="rotate(90 7 7)"/><rect x="6" y="0.5" width="2" height="3" transform="rotate(135 7 7)"/><rect x="6" y="0.5" width="2" height="3" transform="rotate(180 7 7)"/><rect x="6" y="0.5" width="2" height="3" transform="rotate(225 7 7)"/><rect x="6" y="0.5" width="2" height="3" transform="rotate(270 7 7)"/><rect x="6" y="0.5" width="2" height="3" transform="rotate(315 7 7)"/></g><circle cx="7" cy="7" r="2.3" fill="#2f2f2f"/></svg>
<div style="left:1014px;top:-0.97px;font-size:10.6px;line-height:10.6px;color:#f8f8f8;font-weight:normal;font-family:'Liberation Sans', sans-serif;white-space:nowrap;letter-spacing:-0.2px;">MA_...</div>
<svg style="position:absolute;left:896px;top:25px;" width="14" height="14" viewBox="0 0 14 14"><circle cx="7" cy="7" r="5.4" fill="none" stroke="#4a4a4a" stroke-width="2.8"/></svg>
<svg style="position:absolute;left:963px;top:25px;" width="14" height="14" viewBox="0 0 14 14"><g fill="#6e6e6e"><circle cx="7" cy="7" r="4.6"/><rect x="6" y="0.5" width="2" height="3" transform="rotate(0 7 7)"/><rect x="6" y="0.5" width="2" height="3" transform="rotate(45 7 7)"/><rect x="6" y="0.5" width="2" height="3" transform="rotate(90 7 7)"/><rect x="6" y="0.5" width="2" height="3" transform="rotate(135 7 7)"/><rect x="6" y="0.5" width="2" height="3" transform="rotate(180 7 7)"/><rect x="6" y="0.5" width="2" height="3" transform="rotate(225 7 7)"/><rect x="6" y="0.5" width="2" height="3" transform="rotate(270 7 7)"/><rect x="6" y="0.5" width="2" height="3" transform="rotate(315 7 7)"/></g><circle cx="7" cy="7" r="2.3" fill="#2f2f2f"/></svg>
<div style="left:1014px;top:27.18px;font-size:10.6px;line-height:10.6px;color:#f8f8f8;font-weight:normal;font-family:'Liberation Sans', sans-serif;white-space:nowrap;letter-spacing:-0.2px;">MA_...</div>
<svg style="position:absolute;left:896px;top:53px;" width="14" height="14" viewBox="0 0 14 14"><circle cx="7" cy="7" r="5.4" fill="none" stroke="#4a4a4a" stroke-width="2.8"/></svg>
<svg style="position:absolute;left:963px;top:53px;" width="14" height="14" viewBox="0 0 14 14"><g fill="#6e6e6e"><circle cx="7" cy="7" r="4.6"/><rect x="6" y="0.5" width="2" height="3" transform="rotate(0 7 7)"/><rect x="6" y="0.5" width="2" height="3" transform="rotate(45 7 7)"/><rect x="6" y="0.5" width="2" height="3" transform="rotate(90 7 7)"/><rect x="6" y="0.5" width="2" height="3" transform="rotate(135 7 7)"/><rect x="6" y="0.5" width="2" height="3" transform="rotate(180 7 7)"/><rect x="6" y="0.5" width="2" height="3" transform="rotate(225 7 7)"/><rect x="6" y="0.5" width="2" height="3" transform="rotate(270 7 7)"/><rect x="6" y="0.5" width="2" height="3" transform="rotate(315 7 7)"/></g><circle cx="7" cy="7" r="2.3" fill="#2f2f2f"/></svg>
<div style="left:1014px;top:55.48px;font-size:10.6px;line-height:10.6px;color:#f8f8f8;font-weight:normal;font-family:'Liberation Sans', sans-serif;white-space:nowrap;letter-spacing:-0.2px;">MA_...</div>
<svg style="position:absolute;left:896px;top:82px;" width="14" height="14" viewBox="0 0 14 14"><circle cx="7" cy="7" r="5.4" fill="none" stroke="#4a4a4a" stroke-width="2.8"/></svg>
<svg style="position:absolute;left:963px;top:82px;" width="14" height="14" viewBox="0 0 14 14"><g fill="#6e6e6e"><circle cx="7" cy="7" r="4.6"/><rect x="6" y="0.5" width="2" height="3" transform="rotate(0 7 7)"/><rect x="6" y="0.5" width="2" height="3" transform="rotate(45 7 7)"/><rect x="6" y="0.5" width="2" height="3" transform="rotate(90 7 7)"/><rect x="6" y="0.5" width="2" height="3" transform="rotate(135 7 7)"/><rect x="6" y="0.5" width="2" height="3" transform="rotate(180 7 7)"/><rect x="6" y="0.5" width="2" height="3" transform="rotate(225 7 7)"/><rect x="6" y="0.5" width="2" height="3" transform="rotate(270 7 7)"/><rect x="6" y="0.5" width="2" height="3" transform="rotate(315 7 7)"/></g><circle cx="7" cy="7" r="2.3" fill="#2f2f2f"/></svg>
<div style="left:1014px;top:83.78px;font-size:10.6px;line-height:10.6px;color:#f8f8f8;font-weight:normal;font-family:'Liberation Sans', sans-serif;white-space:nowrap;letter-spacing:-0.2px;">MA_...</div>
<svg style="position:absolute;left:896px;top:110px;" width="14" height="14" viewBox="0 0 14 14"><circle cx="7" cy="7" r="5.4" fill="none" stroke="#4a4a4a" stroke-width="2.8"/></svg>
<svg style="position:absolute;left:963px;top:110px;" width="14" height="14" viewBox="0 0 14 14"><g fill="#6e6e6e"><circle cx="7" cy="7" r="4.6"/><rect x="6" y="0.5" width="2" height="3" transform="rotate(0 7 7)"/><rect x="6" y="0.5" width="2" height="3" transform="rotate(45 7 7)"/><rect x="6" y="0.5" width="2" height="3" transform="rotate(90 7 7)"/><rect x="6" y="0.5" width="2" height="3" transform="rotate(135 7 7)"/><rect x="6" y="0.5" width="2" height="3" transform="rotate(180 7 7)"/><rect x="6" y="0.5" width="2" height="3" transform="rotate(225 7 7)"/><rect x="6" y="0.5" width="2" height="3" transform="rotate(270 7 7)"/><rect x="6" y="0.5" width="2" height="3" transform="rotate(315 7 7)"/></g><circle cx="7" cy="7" r="2.3" fill="#2f2f2f"/></svg>
<div style="left:1014px;top:112.08px;font-size:10.6px;line-height:10.6px;color:#f8f8f8;font-weight:normal;font-family:'Liberation Sans', sans-serif;white-space:nowrap;letter-spacing:-0.2px;">MA_...</div>
<svg style="position:absolute;left:896px;top:138px;" width="14" height="14" viewBox="0 0 14 14"><circle cx="7" cy="7" r="5.4" fill="none" stroke="#4a4a4a" stroke-width="2.8"/></svg>
<svg style="position:absolute;left:963px;top:138px;" width="14" height="14" viewBox="0 0 14 14"><g fill="#6e6e6e"><circle cx="7" cy="7" r="4.6"/><rect x="6" y="0.5" width="2" height="3" transform="rotate(0 7 7)"/><rect x="6" y="0.5" width="2" height="3" transform="rotate(45 7 7)"/><rect x="6" y="0.5" width="2" height="3" transform="rotate(90 7 7)"/><rect x="6" y="0.5" width="2" height="3" transform="rotate(135 7 7)"/><rect x="6" y="0.5" width="2" height="3" transform="rotate(180 7 7)"/><rect x="6" y="0.5" width="2" height="3" transform="rotate(225 7 7)"/><rect x="6" y="0.5" width="2" height="3" transform="rotate(270 7 7)"/><rect x="6" y="0.5" width="2" height="3" transform="rotate(315 7 7)"/></g><circle cx="7" cy="7" r="2.3" fill="#2f2f2f"/></svg>
<div style="left:1014px;top:140.38px;font-size:10.6px;line-height:10.6px;color:#f8f8f8;font-weight:normal;font-family:'Liberation Sans', sans-serif;white-space:nowrap;letter-spacing:-0.2px;">MA_...</div>
<svg style="position:absolute;left:896px;top:167px;" width="14" height="14" viewBox="0 0 14 14"><circle cx="7" cy="7" r="5.4" fill="none" stroke="#4a4a4a" stroke-width="2.8"/></svg>
<svg style="position:absolute;left:963px;top:167px;" width="14" height="14" viewBox="0 0 14 14"><g fill="#6e6e6e"><circle cx="7" cy="7" r="4.6"/><rect x="6" y="0.5" width="2" height="3" transform="rotate(0 7 7)"/><rect x="6" y="0.5" width="2" height="3" transform="rotate(45 7 7)"/><rect x="6" y="0.5" width="2" height="3" transform="rotate(90 7 7)"/><rect x="6" y="0.5" width="2" height="3" transform="rotate(135 7 7)"/><rect x="6" y="0.5" width="2" height="3" transform="rotate(180 7 7)"/><rect x="6" y="0.5" width="2" height="3" transform="rotate(225 7 7)"/><rect x="6" y="0.5" width="2" height="3" transform="rotate(270 7 7)"/><rect x="6" y="0.5" width="2" height="3" transform="rotate(315 7 7)"/></g><circle cx="7" cy="7" r="2.3" fill="#2f2f2f"/></svg>
<div style="left:1014px;top:168.68px;font-size:10.6px;line-height:10.6px;color:#f8f8f8;font-weight:normal;font-family:'Liberation Sans', sans-serif;white-space:nowrap;letter-spacing:-0.2px;">MA_...</div>
<div style="left:1063px;top:0px;width:13px;height:185px;background:#3c3c3c;"></div>
<div style="left:1063px;top:0px;width:13px;height:4px;background:#565656;"></div>
<div style="left:1063px;top:118px;width:13px;height:67px;background:#585858;"></div>
<svg style="position:absolute;left:1065px;top:175px;" width="9" height="7" viewBox="0 0 9 7"><path d="M0.5 0.5h8l-4 6z" fill="#7a7a7a"/></svg>
<div style="left:872px;top:190px;font-size:10.4px;line-height:12px;color:#ececec;font-weight:bold;font-family:'Liberation Sans';white-space:nowrap;text-decoration:underline;letter-spacing:-0.3px">Show Selected Compositions</div>
<div style="left:1022px;top:219.38px;font-size:9px;line-height:9px;color:#a9a9a9;font-weight:normal;font-family:'Liberation Sans', sans-serif;white-space:nowrap;">Version: 5.4.4</div>
<div style="left:863px;top:231px;width:226px;height:5px;background:#181818;"></div>
<div style="left:0px;top:232px;width:1089px;height:4px;background:#181818;"></div>
<div style="left:1085px;top:0px;width:4px;height:667px;background:#1a1a1a;"></div>
<div style="left:1089px;top:0px;width:2px;height:667px;background:#2a6cc2;"></div>
<div style="left:1091px;top:0px;width:13px;height:667px;background:#000000;"></div>
<div style="left:1103px;top:0px;width:1px;height:667px;background:#c8c8c8;"></div>
<svg style="position:absolute;left:1091px;top:0px;" width="13" height="667" viewBox="0 0 13 667"><rect x="8" y="1.2" width="4" height="1" fill="#d0d0d0"/><rect x="8" y="5.6" width="4" height="1" fill="#d0d0d0"/><rect x="8" y="10.1" width="4" height="1" fill="#d0d0d0"/><rect x="8" y="14.5" width="4" height="1" fill="#d0d0d0"/><rect x="8" y="19.0" width="4" height="1" fill="#d0d0d0"/><rect x="8" y="23.4" width="4" height="1" fill="#d0d0d0"/><rect x="8" y="27.9" width="4" height="1" fill="#d0d0d0"/><rect x="0" y="32.3" width="12" height="1" fill="#d8d8d8"/><rect x="8" y="36.8" width="4" height="1" fill="#d0d0d0"/><rect x="8" y="41.2" width="4" height="1" fill="#d0d0d0"/><rect x="8" y="45.7" width="4" height="1" fill="#d0d0d0"/><rect x="8" y="50.1" width="4" height="1" fill="#d0d0d0"/><rect x="8" y="54.6" width="4" height="1" fill="#d0d0d0"/><rect x="8" y="59.0" width="4" height="1" fill="#d0d0d0"/><rect x="8" y="63.5" width="4" height="1" fill="#d0d0d0"/><rect x="8" y="67.9" width="4" height="1" fill="#d0d0d0"/><rect x="8" y="72.4" width="4" height="1" fill="#d0d0d0"/><rect x="0" y="76.8" width="12" height="1" fill="#d8d8d8"/><rect x="8" y="81.2" width="4" height="1" fill="#d0d0d0"/><rect x="8" y="85.7" width="4" height="1" fill="#d0d0d0"/><rect x="8" y="90.1" width="4" height="1" fill="#d0d0d0"/><rect x="8" y="94.6" width="4" height="1" fill="#d0d0d0"/><rect x="8" y="99.0" width="4" height="1" fill="#d0d0d0"/><rect x="8" y="103.5" width="4" height="1" fill="#d0d0d0"/><rect x="8" y="107.9" width="4" height="1" fill="#d0d0d0"/><rect x="8" y="112.4" width="4" height="1" fill="#d0d0d0"/><rect x="8" y="116.8" width="4" height="1" fill="#d0d0d0"/><rect x="0" y="121.3" width="12" height="1" fill="#d8d8d8"/><rect x="8" y="125.7" width="4" height="1" fill="#d0d0d0"/><rect x="8" y="130.2" width="4" height="1" fill="#d0d0d0"/><rect x="8" y="134.6" width="4" height="1" fill="#d0d0d0"/><rect x="8" y="139.1" width="4" height="1" fill="#d0d0d0"/><rect x="8" y="143.5" width="4" height="1" fill="#d0d0d0"/><rect x="8" y="148.0" width="4" height="1" fill="#d0d0d0"/><rect x="8" y="152.4" width="4" height="1" fill="#d0d0d0"/><rect x="8" y="156.8" width="4" height="1" fill="#d0d0d0"/><rect x="8" y="161.3" width="4" height="1" fill="#d0d0d0"/><rect x="0" y="165.7" width="12" height="1" fill="#d8d8d8"/><rect x="8" y="170.2" width="4" height="1" fill="#d0d0d0"/><rect x="8" y="174.6" width="4" height="1" fill="#d0d0d0"/><rect x="8" y="179.1" width="4" height="1" fill="#d0d0d0"/><rect x="8" y="183.5" width="4" height="1" fill="#d0d0d0"/><rect x="8" y="188.0" width="4" height="1" fill="#d0d0d0"/><rect x="8" y="192.4" width="4" height="1" fill="#d0d0d0"/><rect x="8" y="196.9" width="4" height="1" fill="#d0d0d0"/><rect x="8" y="201.3" width="4" height="1" fill="#d0d0d0"/><rect x="8" y="205.8" width="4" height="1" fill="#d0d0d0"/><rect x="0" y="210.2" width="12" height="1" fill="#d8d8d8"/><rect x="8" y="214.7" width="4" height="1" fill="#d0d0d0"/><rect x="8" y="219.1" width="4" height="1" fill="#d0d0d0"/><rect x="8" y="223.6" width="4" height="1" fill="#d0d0d0"/><rect x="8" y="228.0" width="4" height="1" fill="#d0d0d0"/><rect x="8" y="232.4" width="4" height="1" fill="#d0d0d0"/><rect x="8" y="236.9" width="4" height="1" fill="#d0d0d0"/><rect x="8" y="241.3" width="4" height="1" fill="#d0d0d0"/><rect x="8" y="245.8" width="4" height="1" fill="#d0d0d0"/><rect x="8" y="250.2" width="4" height="1" fill="#d0d0d0"/><rect x="0" y="254.7" width="12" height="1" fill="#d8d8d8"/><rect x="8" y="259.1" width="4" height="1" fill="#d0d0d0"/><rect x="8" y="263.6" width="4" height="1" fill="#d0d0d0"/><rect x="8" y="268.0" width="4" height="1" fill="#d0d0d0"/><rect x="8" y="272.5" width="4" height="1" fill="#d0d0d0"/><rect x="8" y="276.9" width="4" height="1" fill="#d0d0d0"/><rect x="8" y="281.4" width="4" height="1" fill="#d0d0d0"/><rect x="8" y="285.8" width="4" height="1" fill="#d0d0d0"/><rect x="8" y="290.3" width="4" height="1" fill="#d0d0d0"/><rect x="8" y="294.7" width="4" height="1" fill="#d0d0d0"/><rect x="0" y="299.1" width="12" height="1" fill="#d8d8d8"/><rect x="8" y="303.6" width="4" height="1" fill="#d0d0d0"/><rect x="8" y="308.0" width="4" height="1" fill="#d0d0d0"/><rect x="8" y="312.5" width="4" height="1" fill="#d0d0d0"/><rect x="8" y="316.9" width="4" height="1" fill="#d0d0d0"/><rect x="8" y="321.4" width="4" height="1" fill="#d0d0d0"/><rect x="8" y="325.8" width="4" height="1" fill="#d0d0d0"/><rect x="8" y="330.3" width="4" height="1" fill="#d0d0d0"/><rect x="8" y="334.7" width="4" height="1" fill="#d0d0d0"/><rect x="8" y="339.2" width="4" height="1" fill="#d0d0d0"/><rect x="0" y="343.6" width="12" height="1" fill="#d8d8d8"/><rect x="8" y="348.1" width="4" height="1" fill="#d0d0d0"/><rect x="8" y="352.5" width="4" height="1" fill="#d0d0d0"/><rect x="8" y="357.0" width="4" height="1" fill="#d0d0d0"/><rect x="8" y="361.4" width="4" height="1" fill="#d0d0d0"/><rect x="8" y="365.9" width="4" height="1" fill="#d0d0d0"/><rect x="8" y="370.3" width="4" height="1" fill="#d0d0d0"/><rect x="8" y="374.7" width="4" height="1" fill="#d0d0d0"/><rect x="8" y="379.2" width="4" height="1" fill="#d0d0d0"/><rect x="8" y="383.6" width="4" height="1" fill="#d0d0d0"/><rect x="0" y="388.1" width="12" height="1" fill="#d8d8d8"/><rect x="8" y="392.5" width="4" height="1" fill="#d0d0d0"/><rect x="8" y="397.0" width="4" height="1" fill="#d0d0d0"/><rect x="8" y="401.4" width="4" height="1" fill="#d0d0d0"/><rect x="8" y="405.9" width="4" height="1" fill="#d0d0d0"/><rect x="8" y="410.3" width="4" height="1" fill="#d0d0d0"/><rect x="8" y="414.8" width="4" height="1" fill="#d0d0d0"/><rect x="8" y="419.2" width="4" height="1" fill="#d0d0d0"/><rect x="8" y="423.7" width="4" height="1" fill="#d0d0d0"/><rect x="8" y="428.1" width="4" height="1" fill="#d0d0d0"/><rect x="0" y="432.6" width="12" height="1" fill="#d8d8d8"/><rect x="8" y="437.0" width="4" height="1" fill="#d0d0d0"/><rect x="8" y="441.5" width="4" height="1" fill="#d0d0d0"/><rect x="8" y="445.9" width="4" height="1" fill="#d0d0d0"/><rect x="8" y="450.3" width="4" height="1" fill="#d0d0d0"/><rect x="8" y="454.8" width="4" height="1" fill="#d0d0d0"/><rect x="8" y="459.2" width="4" height="1" fill="#d0d0d0"/><rect x="8" y="463.7" width="4" height="1" fill="#d0d0d0"/><rect x="8" y="468.1" width="4" height="1" fill="#d0d0d0"/><rect x="8" y="472.6" width="4" height="1" fill="#d0d0d0"/><rect x="0" y="477.0" width="12" height="1" fill="#d8d8d8"/><rect x="8" y="481.5" width="4" height="1" fill="#d0d0d0"/><rect x="8" y="485.9" width="4" height="1" fill="#d0d0d0"/><rect x="8" y="490.4" width="4" height="1" fill="#d0d0d0"/><rect x="8" y="494.8" width="4" height="1" fill="#d0d0d0"/><rect x="8" y="499.3" width="4" height="1" fill="#d0d0d0"/><rect x="8" y="503.7" width="4" height="1" fill="#d0d0d0"/><rect x="8" y="508.2" width="4" height="1" fill="#d0d0d0"/><rect x="8" y="512.6" width="4" height="1" fill="#d0d0d0"/><rect x="8" y="517.1" width="4" height="1" fill="#d0d0d0"/><rect x="0" y="521.5" width="12" height="1" fill="#d8d8d8"/><rect x="8" y="525.9" width="4" height="1" fill="#d0d0d0"/><rect x="8" y="530.4" width="4" height="1" fill="#d0d0d0"/><rect x="8" y="534.8" width="4" height="1" fill="#d0d0d0"/><rect x="8" y="539.3" width="4" height="1" fill="#d0d0d0"/><rect x="8" y="543.7" width="4" height="1" fill="#d0d0d0"/><rect x="8" y="548.2" width="4" height="1" fill="#d0d0d0"/><rect x="8" y="552.6" width="4" height="1" fill="#d0d0d0"/><rect x="8" y="557.1" width="4" height="1" fill="#d0d0d0"/><rect x="8" y="561.5" width="4" height="1" fill="#d0d0d0"/><rect x="0" y="566.0" width="12" height="1" fill="#d8d8d8"/><rect x="8" y="570.4" width="4" height="1" fill="#d0d0d0"/><rect x="8" y="574.9" width="4" height="1" fill="#d0d0d0"/><rect x="8" y="579.3" width="4" height="1" fill="#d0d0d0"/><rect x="8" y="583.8" width="4" height="1" fill="#d0d0d0"/><rect x="8" y="588.2" width="4" height="1" fill="#d0d0d0"/><rect x="8" y="592.7" width="4" height="1" fill="#d0d0d0"/><rect x="8" y="597.1" width="4" height="1" fill="#d0d0d0"/><rect x="8" y="601.5" width="4" height="1" fill="#d0d0d0"/><rect x="8" y="606.0" width="4" height="1" fill="#d0d0d0"/><rect x="0" y="610.4" width="12" height="1" fill="#d8d8d8"/><rect x="8" y="614.9" width="4" height="1" fill="#d0d0d0"/><rect x="8" y="619.3" width="4" height="1" fill="#d0d0d0"/><rect x="8" y="623.8" width="4" height="1" fill="#d0d0d0"/><rect x="8" y="628.2" width="4" height="1" fill="#d0d0d0"/><rect x="8" y="632.7" width="4" height="1" fill="#d0d0d0"/><rect x="8" y="637.1" width="4" height="1" fill="#d0d0d0"/><rect x="8" y="641.6" width="4" height="1" fill="#d0d0d0"/><rect x="8" y="646.0" width="4" height="1" fill="#d0d0d0"/><rect x="8" y="650.5" width="4" height="1" fill="#d0d0d0"/><rect x="0" y="654.9" width="12" height="1" fill="#d8d8d8"/><rect x="8" y="659.4" width="4" height="1" fill="#d0d0d0"/><rect x="8" y="663.8" width="4" height="1" fill="#d0d0d0"/></svg>
<svg style="position:absolute;left:1091px;top:0px;" width="13" height="667" viewBox="0 0 13 667"><text transform="translate(0.4 -11.3) rotate(90)" font-family="Liberation Sans" font-size="6.3" letter-spacing="2.6" fill="#e0e0e0">200</text><text transform="translate(0.4 33.1) rotate(90)" font-family="Liberation Sans" font-size="6.3" letter-spacing="2.6" fill="#e0e0e0">100</text><text transform="translate(0.4 77.6) rotate(90)" font-family="Liberation Sans" font-size="6.3" letter-spacing="2.6" fill="#e0e0e0">0</text><text transform="translate(0.4 122.1) rotate(90)" font-family="Liberation Sans" font-size="6.3" letter-spacing="2.6" fill="#e0e0e0">100</text><text transform="translate(0.4 166.5) rotate(90)" font-family="Liberation Sans" font-size="6.3" letter-spacing="2.6" fill="#e0e0e0">200</text><text transform="translate(0.4 211.0) rotate(90)" font-family="Liberation Sans" font-size="6.3" letter-spacing="2.6" fill="#e0e0e0">300</text><text transform="translate(0.4 255.5) rotate(90)" font-family="Liberation Sans" font-size="6.3" letter-spacing="2.6" fill="#e0e0e0">400</text><text transform="translate(0.4 299.9) rotate(90)" font-family="Liberation Sans" font-size="6.3" letter-spacing="2.6" fill="#e0e0e0">500</text><text transform="translate(0.4 344.4) rotate(90)" font-family="Liberation Sans" font-size="6.3" letter-spacing="2.6" fill="#e0e0e0">600</text><text transform="translate(0.4 388.9) rotate(90)" font-family="Liberation Sans" font-size="6.3" letter-spacing="2.6" fill="#e0e0e0">700</text><text transform="translate(0.4 433.4) rotate(90)" font-family="Liberation Sans" font-size="6.3" letter-spacing="2.6" fill="#e0e0e0">800</text><text transform="translate(0.4 477.8) rotate(90)" font-family="Liberation Sans" font-size="6.3" letter-spacing="2.6" fill="#e0e0e0">900</text><text transform="translate(0.4 522.3) rotate(90)" font-family="Liberation Sans" font-size="6.3" letter-spacing="2.6" fill="#e0e0e0">1000</text><text transform="translate(0.4 566.8) rotate(90)" font-family="Liberation Sans" font-size="6.3" letter-spacing="2.6" fill="#e0e0e0">1100</text><text transform="translate(0.4 611.2) rotate(90)" font-family="Liberation Sans" font-size="6.3" letter-spacing="2.6" fill="#e0e0e0">1200</text><text transform="translate(0.4 655.7) rotate(90)" font-family="Liberation Sans" font-size="6.3" letter-spacing="2.6" fill="#e0e0e0">1300</text></svg>
<div style="left:1104px;top:0px;width:816px;height:667px;background:#232323;"></div>
<div style="left:1177px;top:75px;width:669px;height:457px;background:#000;"></div>
<div style="left:1178px;top:76px;width:667px;height:455px;background:#ffffff;"></div>
<svg style="position:absolute;left:1104px;top:0px;" width="816" height="667" viewBox="0 0 816 667"><g transform="translate(-1104 0)"><path d="M1240,274.5 L1324,274.5 C1355.68,274.5 1335.52,344.5 1372,344.5 C1393.24,344.5 1403.86,201.5 1431,201.5 C1468.70,201.5 1458.30,410 1496,410 C1533.70,410 1518.10,254.5 1561,254.5 C1602.41,254.5 1581.20,336.3 1611.5,336.3 C1642.54,336.3 1625.08,274.5 1660,274.5 L1788.5,274.5" fill="none" stroke="#e622f5" stroke-width="20" stroke-linecap="round" stroke-linejoin="round"/><rect x="1239.8" y="274.5" width="45" height="45" fill="none" stroke="#ec9a22" stroke-width="1.3"/><rect x="1323.8" y="274.5" width="45" height="45" fill="none" stroke="#ec9a22" stroke-width="1.3"/><rect x="1659.8" y="274.5" width="45" height="45" fill="none" stroke="#ec9a22" stroke-width="1.3"/><rect x="1788.3" y="274.5" width="45" height="45" fill="none" stroke="#ec9a22" stroke-width="1.3"/><rect x="1372" y="344.5" width="45" height="44.5" fill="none" stroke="#ec9a22" stroke-width="1.5"/><rect x="1391.8" y="341.8" width="7" height="7" fill="#6a5a40" opacity="0.6"/><rect x="1391.0" y="341.0" width="7" height="7" fill="#e8921a"/><rect x="1414.3" y="341.8" width="7" height="7" fill="#6a5a40" opacity="0.6"/><rect x="1413.5" y="341.0" width="7" height="7" fill="#e8921a"/><rect x="1369.3" y="364.05" width="7" height="7" fill="#6a5a40" opacity="0.6"/><rect x="1368.5" y="363.25" width="7" height="7" fill="#e8921a"/><rect x="1414.3" y="364.05" width="7" height="7" fill="#6a5a40" opacity="0.6"/><rect x="1413.5" y="363.25" width="7" height="7" fill="#e8921a"/><rect x="1369.3" y="386.3" width="7" height="7" fill="#6a5a40" opacity="0.6"/><rect x="1368.5" y="385.5" width="7" height="7" fill="#e8921a"/><rect x="1391.8" y="386.3" width="7" height="7" fill="#6a5a40" opacity="0.6"/><rect x="1391.0" y="385.5" width="7" height="7" fill="#e8921a"/><rect x="1414.3" y="386.3" width="7" height="7" fill="#6a5a40" opacity="0.6"/><rect x="1413.5" y="385.5" width="7" height="7" fill="#e8921a"/><circle cx="1372" cy="344.5" r="3.3" fill="none" stroke="#b08a4a" stroke-width="1.6"/><circle cx="1372" cy="344.5" r="1.2" fill="#6a5a40"/><path d="M1366,344.5h3M1375,344.5h3M1372,338.5v3M1372,347.5v3" stroke="#f0b050" stroke-width="1"/><rect x="1431" y="201.5" width="45" height="44.5" fill="none" stroke="#ec9a22" stroke-width="1.5"/><rect x="1450.8" y="198.8" width="7" height="7" fill="#6a5a40" opacity="0.6"/><rect x="1450.0" y="198.0" width="7" height="7" fill="#e8921a"/><rect x="1473.3" y="198.8" width="7" height="7" fill="#6a5a40" opacity="0.6"/><rect x="1472.5" y="198.0" width="7" height="7" fill="#e8921a"/><rect x="1428.3" y="221.05" width="7" height="7" fill="#6a5a40" opacity="0.6"/><rect x="1427.5" y="220.25" width="7" height="7" fill="#e8921a"/><rect x="1473.3" y="221.05" width="7" height="7" fill="#6a5a40" opacity="0.6"/><rect x="1472.5" y="220.25" width="7" height="7" fill="#e8921a"/><rect x="1428.3" y="243.3" width="7" height="7" fill="#6a5a40" opacity="0.6"/><rect x="1427.5" y="242.5" width="7" height="7" fill="#e8921a"/><rect x="1450.8" y="243.3" width="7" height="7" fill="#6a5a40" opacity="0.6"/><rect x="1450.0" y="242.5" width="7" height="7" fill="#e8921a"/><rect x="1473.3" y="243.3" width="7" height="7" fill="#6a5a40" opacity="0.6"/><rect x="1472.5" y="242.5" width="7" height="7" fill="#e8921a"/><circle cx="1431" cy="201.5" r="3.3" fill="none" stroke="#b08a4a" stroke-width="1.6"/><circle cx="1431" cy="201.5" r="1.2" fill="#6a5a40"/><path d="M1425,201.5h3M1434,201.5h3M1431,195.5v3M1431,204.5v3" stroke="#f0b050" stroke-width="1"/><rect x="1496" y="410" width="45" height="44.5" fill="none" stroke="#ec9a22" stroke-width="1.5"/><rect x="1515.8" y="407.3" width="7" height="7" fill="#6a5a40" opacity="0.6"/><rect x="1515.0" y="406.5" width="7" height="7" fill="#e8921a"/><rect x="1538.3" y="407.3" width="7" height="7" fill="#6a5a40" opacity="0.6"/><rect x="1537.5" y="406.5" width="7" height="7" fill="#e8921a"/><rect x="1493.3" y="429.55" width="7" height="7" fill="#6a5a40" opacity="0.6"/><rect x="1492.5" y="428.75" width="7" height="7" fill="#e8921a"/><rect x="1538.3" y="429.55" width="7" height="7" fill="#6a5a40" opacity="0.6"/><rect x="1537.5" y="428.75" width="7" height="7" fill="#e8921a"/><rect x="1493.3" y="451.8" width="7" height="7" fill="#6a5a40" opacity="0.6"/><rect x="1492.5" y="451.0" width="7" height="7" fill="#e8921a"/><rect x="1515.8" y="451.8" width="7" height="7" fill="#6a5a40" opacity="0.6"/><rect x="1515.0" y="451.0" width="7" height="7" fill="#e8921a"/><rect x="1538.3" y="451.8" width="7" height="7" fill="#6a5a40" opacity="0.6"/><rect x="1537.5" y="451.0" width="7" height="7" fill="#e8921a"/><circle cx="1496" cy="410" r="3.3" fill="none" stroke="#b08a4a" stroke-width="1.6"/><circle cx="1496" cy="410" r="1.2" fill="#6a5a40"/><path d="M1490,410h3M1499,410h3M1496,404v3M1496,413v3" stroke="#f0b050" stroke-width="1"/><rect x="1560.5" y="254.5" width="45" height="44.5" fill="none" stroke="#ec9a22" stroke-width="1.5"/><rect x="1580.3" y="251.8" width="7" height="7" fill="#6a5a40" opacity="0.6"/><rect x="1579.5" y="251.0" width="7" height="7" fill="#e8921a"/><rect x="1602.8" y="251.8" width="7" height="7" fill="#6a5a40" opacity="0.6"/><rect x="1602.0" y="251.0" width="7" height="7" fill="#e8921a"/><rect x="1557.8" y="274.05" width="7" height="7" fill="#6a5a40" opacity="0.6"/><rect x="1557.0" y="273.25" width="7" height="7" fill="#e8921a"/><rect x="1602.8" y="274.05" width="7" height="7" fill="#6a5a40" opacity="0.6"/><rect x="1602.0" y="273.25" width="7" height="7" fill="#e8921a"/><rect x="1557.8" y="296.3" width="7" height="7" fill="#6a5a40" opacity="0.6"/><rect x="1557.0" y="295.5" width="7" height="7" fill="#e8921a"/><rect x="1580.3" y="296.3" width="7" height="7" fill="#6a5a40" opacity="0.6"/><rect x="1579.5" y="295.5" width="7" height="7" fill="#e8921a"/><rect x="1602.8" y="296.3" width="7" height="7" fill="#6a5a40" opacity="0.6"/><rect x="1602.0" y="295.5" width="7" height="7" fill="#e8921a"/><circle cx="1560.5" cy="254.5" r="3.3" fill="none" stroke="#b08a4a" stroke-width="1.6"/><circle cx="1560.5" cy="254.5" r="1.2" fill="#6a5a40"/><path d="M1554.5,254.5h3M1563.5,254.5h3M1560.5,248.5v3M1560.5,257.5v3" stroke="#f0b050" stroke-width="1"/><rect x="1611.5" y="336" width="45" height="44.5" fill="none" stroke="#ec9a22" stroke-width="1.5"/><rect x="1631.3" y="333.3" width="7" height="7" fill="#6a5a40" opacity="0.6"/><rect x="1630.5" y="332.5" width="7" height="7" fill="#e8921a"/><rect x="1653.8" y="333.3" width="7" height="7" fill="#6a5a40" opacity="0.6"/><rect x="1653.0" y="332.5" width="7" height="7" fill="#e8921a"/><rect x="1608.8" y="355.55" width="7" height="7" fill="#6a5a40" opacity="0.6"/><rect x="1608.0" y="354.75" width="7" height="7" fill="#e8921a"/><rect x="1653.8" y="355.55" width="7" height="7" fill="#6a5a40" opacity="0.6"/><rect x="1653.0" y="354.75" width="7" height="7" fill="#e8921a"/><rect x="1608.8" y="377.8" width="7" height="7" fill="#6a5a40" opacity="0.6"/><rect x="1608.0" y="377.0" width="7" height="7" fill="#e8921a"/><rect x="1631.3" y="377.8" width="7" height="7" fill="#6a5a40" opacity="0.6"/><rect x="1630.5" y="377.0" width="7" height="7" fill="#e8921a"/><rect x="1653.8" y="377.8" width="7" height="7" fill="#6a5a40" opacity="0.6"/><rect x="1653.0" y="377.0" width="7" height="7" fill="#e8921a"/><circle cx="1611.5" cy="336" r="3.3" fill="none" stroke="#b08a4a" stroke-width="1.6"/><circle cx="1611.5" cy="336" r="1.2" fill="#6a5a40"/><path d="M1605.5,336h3M1614.5,336h3M1611.5,330v3M1611.5,339v3" stroke="#f0b050" stroke-width="1"/></g></svg>
<div style="left:1375px;top:0px;width:1px;height:667px;background:rgba(143,135,255,0.5);"></div>
<div style="left:1514.5px;top:0px;width:1px;height:667px;background:rgba(143,135,255,0.5);"></div>
<div style="left:1656px;top:0px;width:1px;height:667px;background:rgba(143,135,255,0.5);"></div>
<div style="left:0px;top:236px;width:1085px;height:24px;background:#232323;"></div>
<div style="left:13px;top:243px;width:9px;height:9px;background:#b39f7c;"></div>
<div style="left:32.5px;top:243.94px;font-size:10px;line-height:10px;color:#a6a6a6;font-weight:normal;font-family:'Liberation Sans', sans-serif;white-space:nowrap;">MA_All</div>
<div style="left:115px;top:243px;width:9px;height:9px;background:#b39f7c;"></div>
<div style="left:134.5px;top:243.94px;font-size:10px;line-height:10px;color:#a6a6a6;font-weight:normal;font-family:'Liberation Sans', sans-serif;white-space:nowrap;">MA_speaking</div>
<div style="left:244px;top:243px;width:9px;height:9px;background:#b39f7c;"></div>
<div style="left:263.5px;top:243.94px;font-size:10px;line-height:10px;color:#a6a6a6;font-weight:normal;font-family:'Liberation Sans', sans-serif;white-space:nowrap;">MA_calm</div>
<div style="left:355px;top:243px;width:9px;height:9px;background:#b39f7c;"></div>
<div style="left:374.5px;top:243.94px;font-size:10px;line-height:10px;color:#cfcfcf;font-weight:normal;font-family:'Liberation Sans', sans-serif;white-space:nowrap;">MA_user_speaker_v2</div>
<div style="left:518px;top:243px;width:9px;height:9px;background:#b39f7c;"></div>
<div style="left:537.5px;top:243.94px;font-size:10px;line-height:10px;color:#a6a6a6;font-weight:normal;font-family:'Liberation Sans', sans-serif;white-space:nowrap;">MA_user_speaking_v2</div>
<div style="left:687px;top:243px;width:9px;height:9px;background:#b39f7c;"></div>
<div style="left:706.5px;top:243.94px;font-size:10px;line-height:10px;color:#a6a6a6;font-weight:normal;font-family:'Liberation Sans', sans-serif;white-space:nowrap;">Pre-comp_MA_speaking</div>
<div style="left:865px;top:243px;width:9px;height:9px;background:#b39f7c;"></div>
<div style="left:884.5px;top:243.94px;font-size:10px;line-height:10px;color:#a6a6a6;font-weight:normal;font-family:'Liberation Sans', sans-serif;white-space:nowrap;">Pre-comp_MA_calm</div>
<div style="left:1024px;top:243px;width:9px;height:9px;background:#b39f7c;"></div>
<div style="left:1043.5px;top:243.94px;font-size:10px;line-height:10px;color:#a6a6a6;font-weight:normal;font-family:'Liberation Sans', sans-serif;white-space:nowrap;">M</div>
<div style="left:1050px;top:239px;width:1px;height:18px;background:#2e2e2e;"></div>
<div style="left:1035px;top:236px;width:15px;height:24px;background:#232323;"></div>
<div style="left:1043px;top:243.94px;font-size:10px;line-height:10px;color:#a6a6a6;font-weight:normal;font-family:'Liberation Sans', sans-serif;white-space:nowrap;">M</div>
<svg style="position:absolute;left:340px;top:244px;" width="8" height="8" viewBox="0 0 8 8"><path d="M1 1l6 6M7 1l-6 6" stroke="#aaa" stroke-width="1.1"/></svg>
<svg style="position:absolute;left:478px;top:244px;" width="9" height="9" viewBox="0 0 9 9"><path d="M0 1h9M0 4.5h9M0 8h9" stroke="#bdbdbd" stroke-width="1.3"/></svg>
<div style="left:341px;top:257px;width:146px;height:2px;background:#cdcdcd;border-radius:1px;"></div>
<svg style="position:absolute;left:1072px;top:242px;" width="11" height="9" viewBox="0 0 11 9"><path d="M1 1l3.5 3.5L1 8M6 1l3.5 3.5L6 8" fill="none" stroke="#c8c8c8" stroke-width="1.5"/></svg>
<div style="left:27px;top:263.62px;font-size:13.8px;line-height:13.8px;color:#3b97f2;font-weight:bold;font-family:'Liberation Sans', sans-serif;white-space:nowrap;">00120</div>
<div style="left:0px;top:280.34px;font-size:9.4px;line-height:9.4px;color:#2f72c4;font-weight:normal;font-family:'Liberation Sans', sans-serif;white-space:nowrap;">0:00:04:00 (30.00 fps)</div>
<div style="left:104px;top:267px;width:441px;height:17px;background:#191919;border-radius:3px;"></div>
<svg style="position:absolute;left:109px;top:269px;" width="14" height="13" viewBox="0 0 14 13"><circle cx="7.5" cy="5" r="3.6" fill="none" stroke="#c8c8c8" stroke-width="1.3"/><path d="M5 7.5L1 11.5" stroke="#c8c8c8" stroke-width="1.5"/><path d="M10 9.5h4l-2 2z" fill="#c8c8c8"/></svg>
<svg style="position:absolute;left:559px;top:268px;" width="17" height="15" viewBox="0 0 17 15"><path d="M0 2.5h4M4 2.5h9M7 2.5v5.5h5" stroke="#cfcfcf" stroke-width="1.3" fill="none"/><rect x="2" y="1" width="5" height="3" rx="1.5" fill="#cfcfcf"/><rect x="9" y="1" width="5" height="3" rx="1.5" fill="#cfcfcf"/><rect x="9" y="6.5" width="5" height="3" rx="1.5" fill="#cfcfcf"/><path d="M11 11h5l-2.5 2.5z" fill="#cfcfcf"/></svg>
<svg style="position:absolute;left:588px;top:267px;" width="17" height="16" viewBox="0 0 17 16"><circle cx="4" cy="4" r="2.5" fill="#dcdcdc"/><path d="M4 0v8M0 4h8M1.2 1.2l5.6 5.6M6.8 1.2l-5.6 5.6" stroke="#dcdcdc" stroke-width="0.8"/><path d="M10.5 6l5 2.5v5.5l-5 2.5-5-2.5V8.5z" fill="none" stroke="#d0d0d0" stroke-width="1.2"/><path d="M5.5 8.5l5 2.5 5-2.5M10.5 11v5" fill="none" stroke="#d0d0d0" stroke-width="1.2"/></svg>
<svg style="position:absolute;left:620px;top:269px;" width="12" height="11" viewBox="0 0 12 11"><path d="M2 6.6V4.2a4 3.6 0 0 1 8 0v2.4z" fill="#cfcfcf"/><rect x="5" y="5" width="2" height="4.2" fill="#cfcfcf"/><rect x="0.3" y="6.9" width="11.4" height="1.4" fill="#cfcfcf"/><circle cx="4.4" cy="3.8" r="0.8" fill="#1a1a1a"/><circle cx="7.6" cy="3.8" r="0.8" fill="#1a1a1a"/></svg>
<svg style="position:absolute;left:643px;top:268px;" width="15" height="15" viewBox="0 0 15 15"><rect x="4" y="0.5" width="10" height="10.5" fill="#bdbdbd" stroke="#888"/><rect x="2" y="2.5" width="10" height="10.5" fill="#9a9a9a" stroke="#666"/><rect x="0.5" y="4.5" width="10" height="10" fill="#cfcfcf" stroke="#777"/><rect x="3" y="8" width="5" height="2" fill="#777"/></svg>
<svg style="position:absolute;left:666px;top:268px;" width="15" height="14" viewBox="0 0 15 14"><circle cx="9" cy="5" r="4.5" fill="#8a8a8a" stroke="#cfcfcf" stroke-width="1"/><circle cx="6.5" cy="7.5" r="4.5" fill="none" stroke="#cfcfcf" stroke-width="1"/><circle cx="5" cy="9" r="4.5" fill="none" stroke="#cfcfcf" stroke-width="1"/></svg>
<svg style="position:absolute;left:696px;top:267px;" width="16" height="16" viewBox="0 0 16 16"><rect x="1" y="2" width="14" height="13" fill="none" stroke="#cfcfcf" stroke-width="1.2"/><path d="M3 5C7 5 8 12 13 12" fill="none" stroke="#cfcfcf" stroke-width="1.3"/><path d="M3 0.5v2M6 0.5v2M9 0.5v2M12 0.5v2" stroke="#cfcfcf" stroke-width="1"/></svg>
<div style="left:0px;top:291px;width:725px;height:17px;background:#2c2c2c;"></div>
<div style="left:0px;top:308px;width:727px;height:2px;background:#151515;"></div>
<svg style="position:absolute;left:3px;top:293px;" width="12" height="12" viewBox="0 0 12 12"><path d="M1 1h5l5.5 5.5-5 5L1 6z" fill="#bdbdbd"/><circle cx="3.5" cy="3.5" r="1" fill="#2c2c2c"/></svg>
<div style="left:19px;top:294px;width:1px;height:11px;background:#1c1c1c;"></div>
<div style="left:48px;top:294px;width:1px;height:11px;background:#1c1c1c;"></div>
<div style="left:277px;top:294px;width:1px;height:11px;background:#1c1c1c;"></div>
<div style="left:337px;top:294px;width:1px;height:11px;background:#1c1c1c;"></div>
<div style="left:485px;top:294px;width:1px;height:11px;background:#1c1c1c;"></div>
<div style="left:607px;top:294px;width:1px;height:11px;background:#1c1c1c;"></div>
<div style="left:711px;top:294px;width:1px;height:11px;background:#1c1c1c;"></div>
<div style="left:25px;top:296.73px;font-size:8px;line-height:8px;color:#8a8a8a;font-weight:normal;font-family:'Liberation Sans', sans-serif;white-space:nowrap;">#</div>
<div style="left:37px;top:295.88px;font-size:9px;line-height:9px;color:#8a8a8a;font-weight:normal;font-family:'Liberation Sans', sans-serif;white-space:nowrap;">.</div>
<div style="left:53px;top:296.60px;font-size:8.5px;line-height:8.5px;color:#a0a0a0;font-weight:normal;font-family:'Liberation Sans', sans-serif;white-space:nowrap;">Layer Name</div>
<svg style="position:absolute;left:281px;top:295px;" width="12" height="10" viewBox="0 0 12 10"><path d="M0.6 5C2.8 1.5 9.2 1.5 11.4 5 9.2 8.5 2.8 8.5 0.6 5z" fill="#e2e2e2"/><circle cx="6" cy="5" r="1.9" fill="#1e1e1e"/><circle cx="6.6" cy="4.4" r="0.5" fill="#bbb"/></svg>
<svg style="position:absolute;left:294px;top:294px;" width="12" height="12" viewBox="0 0 12 12"><path d="M0.5 4h2.5l3-3v10l-3-3H0.5z" fill="#cfcfcf"/><path d="M8 3a4 4 0 0 1 0 6M10 1.5a6 6 0 0 1 0 9" fill="none" stroke="#cfcfcf" stroke-width="1"/></svg>
<svg style="position:absolute;left:311px;top:296px;" width="8" height="8" viewBox="0 0 8 8"><circle cx="4" cy="4" r="3.2" fill="#d0d0d0"/></svg>
<svg style="position:absolute;left:322px;top:293px;" width="11" height="12" viewBox="0 0 11 12"><path d="M3 5.5V3.8a2.5 2.5 0 0 1 5 0V5.5" fill="none" stroke="#d0d0d0" stroke-width="1.4"/><rect x="1.5" y="5.5" width="8" height="6" fill="#d0d0d0"/><rect x="5" y="7.5" width="1.2" height="2.5" fill="#2c2c2c"/></svg>
<div style="left:342px;top:296.77px;font-size:8.3px;line-height:8.3px;color:#a0a0a0;font-weight:normal;font-family:'Liberation Sans', sans-serif;white-space:nowrap;">Mode</div>
<div style="left:409px;top:296.60px;font-size:8.5px;line-height:8.5px;color:#a0a0a0;font-weight:normal;font-family:'Liberation Sans', sans-serif;white-space:nowrap;">T</div>
<div style="left:423px;top:296.77px;font-size:8.3px;line-height:8.3px;color:#a0a0a0;font-weight:normal;font-family:'Liberation Sans', sans-serif;white-space:nowrap;">.TrkMat</div>
<svg style="position:absolute;left:489px;top:294px;" width="12" height="11" viewBox="0 0 12 11"><path d="M2 6.6V4.2a4 3.6 0 0 1 8 0v2.4z" fill="#cfcfcf"/><rect x="5" y="5" width="2" height="4.2" fill="#cfcfcf"/><rect x="0.3" y="6.9" width="11.4" height="1.4" fill="#cfcfcf"/><circle cx="4.4" cy="3.8" r="0.8" fill="#1a1a1a"/><circle cx="7.6" cy="3.8" r="0.8" fill="#1a1a1a"/></svg>
<svg style="position:absolute;left:503px;top:294px;" width="11" height="11" viewBox="0 0 11 11"><circle cx="5.5" cy="5.5" r="2.5" fill="#d0d0d0"/><path d="M5.5 0v11M0 5.5h11M1.6 1.6l7.8 7.8M9.4 1.6l-7.8 7.8" stroke="#d0d0d0" stroke-width="1"/></svg>
<svg style="position:absolute;left:515px;top:294px;" width="12" height="12" viewBox="0 0 12 12"><path d="M1 1l10 10" stroke="#d0d0d0" stroke-width="1.6" stroke-dasharray="1.6 0.9"/></svg>
<div style="left:528px;top:294.34px;font-size:12px;line-height:12px;color:#cfcfcf;font-weight:normal;font-family:'Liberation Serif', serif;white-space:nowrap;"><i>fx</i></div>
<svg style="position:absolute;left:542px;top:294px;" width="12" height="12" viewBox="0 0 12 12"><rect x="0.5" y="0.5" width="11" height="11" fill="#bdbdbd" stroke="#888"/><rect x="3" y="4" width="6" height="3" fill="#555"/><path d="M1.5 2v8M10.5 2v8" stroke="#777" stroke-dasharray="1 1"/></svg>
<svg style="position:absolute;left:556px;top:293px;" width="13" height="13" viewBox="0 0 13 13"><circle cx="8" cy="5" r="4.3" fill="#888" stroke="#d0d0d0"/><circle cx="6" cy="7.5" r="4.3" fill="none" stroke="#d0d0d0"/><circle cx="4.5" cy="8.5" r="4" fill="none" stroke="#d0d0d0"/></svg>
<svg style="position:absolute;left:569px;top:294px;" width="12" height="12" viewBox="0 0 12 12"><circle cx="6" cy="6" r="5" fill="#2c2c2c" stroke="#d0d0d0" stroke-width="1.2"/><path d="M9.5 2.5A5 5 0 0 1 2.5 9.5z" fill="#d0d0d0"/></svg>
<svg style="position:absolute;left:582px;top:293px;" width="12" height="13" viewBox="0 0 12 13"><path d="M6 0.8l5 2.7v5.8l-5 2.9-5-2.9V3.5z" fill="none" stroke="#d0d0d0" stroke-width="1.1"/><path d="M1 3.5l5 2.7 5-2.7M6 6.2v6" fill="none" stroke="#d0d0d0" stroke-width="1.1"/></svg>
<div style="left:612px;top:296.69px;font-size:8.4px;line-height:8.4px;color:#a0a0a0;font-weight:normal;font-family:'Liberation Sans', sans-serif;white-space:nowrap;">Parent &amp; Link</div>
<div style="left:725px;top:260px;width:360px;height:31px;background:#232323;"></div>
<div style="left:731px;top:265.5px;width:143px;height:8.5px;background:#6f6f6f;"></div>
<div style="left:880px;top:265.5px;width:185px;height:8.5px;background:#3b3731;"></div>
<svg style="position:absolute;left:725px;top:265px;" width="8" height="10" viewBox="0 0 8 10"><path d="M7 0.5v9H5C2 9.5 0 7 0 5S2 0.5 5 0.5z" fill="#2f8ef0"/></svg>
<svg style="position:absolute;left:873px;top:265px;" width="8" height="10" viewBox="0 0 8 10"><path d="M0.5 0.5v9H3C6 9.5 8 7 8 5S6 0.5 3 0.5z" fill="#2f8ef0"/></svg>
<div style="left:936px;top:265.5px;width:2px;height:8.5px;background:#2f8ef0;"></div>
<div style="left:725px;top:275.34px;font-size:9.4px;line-height:9.4px;color:#a8a8a8;font-weight:normal;font-family:'Liberation Sans', sans-serif;white-space:nowrap;">0000</div>
<div style="left:731.5px;top:287px;width:1px;height:4px;background:#8a8a8a;"></div>
<div style="left:759px;top:275.34px;font-size:9.4px;line-height:9.4px;color:#a8a8a8;font-weight:normal;font-family:'Liberation Sans', sans-serif;white-space:nowrap;">00010</div>
<div style="left:771.5px;top:287px;width:1px;height:4px;background:#8a8a8a;"></div>
<div style="left:799px;top:275.34px;font-size:9.4px;line-height:9.4px;color:#a8a8a8;font-weight:normal;font-family:'Liberation Sans', sans-serif;white-space:nowrap;">00020</div>
<div style="left:811.5px;top:287px;width:1px;height:4px;background:#8a8a8a;"></div>
<div style="left:839px;top:275.34px;font-size:9.4px;line-height:9.4px;color:#a8a8a8;font-weight:normal;font-family:'Liberation Sans', sans-serif;white-space:nowrap;">00030</div>
<div style="left:851.5px;top:287px;width:1px;height:4px;background:#8a8a8a;"></div>
<div style="left:879px;top:275.34px;font-size:9.4px;line-height:9.4px;color:#a8a8a8;font-weight:normal;font-family:'Liberation Sans', sans-serif;white-space:nowrap;">00040</div>
<div style="left:891.5px;top:287px;width:1px;height:4px;background:#8a8a8a;"></div>
<div style="left:919px;top:275.34px;font-size:9.4px;line-height:9.4px;color:#a8a8a8;font-weight:normal;font-family:'Liberation Sans', sans-serif;white-space:nowrap;">00050</div>
<div style="left:931.5px;top:287px;width:1px;height:4px;background:#8a8a8a;"></div>
<div style="left:959px;top:275.34px;font-size:9.4px;line-height:9.4px;color:#a8a8a8;font-weight:normal;font-family:'Liberation Sans', sans-serif;white-space:nowrap;">00060</div>
<div style="left:971.5px;top:287px;width:1px;height:4px;background:#8a8a8a;"></div>
<div style="left:999px;top:275.34px;font-size:9.4px;line-height:9.4px;color:#a8a8a8;font-weight:normal;font-family:'Liberation Sans', sans-serif;white-space:nowrap;">00070</div>
<div style="left:1011.5px;top:287px;width:1px;height:4px;background:#8a8a8a;"></div>
<div style="left:1039px;top:275.34px;font-size:9.4px;line-height:9.4px;color:#a8a8a8;font-weight:normal;font-family:'Liberation Sans', sans-serif;white-space:nowrap;">00080</div>
<div style="left:1051.5px;top:287px;width:1px;height:4px;background:#8a8a8a;"></div>
<div style="left:725px;top:291px;width:4px;height:17px;background:#2b2b2b;"></div>
<div style="left:711px;top:295px;width:1px;height:9px;background:#1a1a1a;"></div>
<div style="left:731px;top:292px;width:339px;height:13px;background:#686868;"></div>
<svg style="position:absolute;left:725px;top:291px;" width="7" height="14" viewBox="0 0 7 14"><path d="M6.5 0.5v13H5C2 13.5 0.5 11 0.5 7S2 0.5 5 0.5z" fill="#2f8ef0"/></svg>
<div style="left:727px;top:305px;width:343px;height:3px;background:#1b1b1b;"></div>
<div style="left:752px;top:306px;width:4px;height:2.5px;background:#22d422;"></div>
<div style="left:760px;top:306px;width:108px;height:2.5px;background:#22d422;"></div>
<div style="left:872px;top:306px;width:32px;height:2.5px;background:#22d422;"></div>
<div style="left:908px;top:306px;width:8px;height:2.5px;background:#22d422;"></div>
<div style="left:920px;top:306px;width:29px;height:2.5px;background:#22d422;"></div>
<div style="left:952px;top:306px;width:16px;height:2.5px;background:#22d422;"></div>
<div style="left:972px;top:306px;width:9px;height:2.5px;background:#22d422;"></div>
<div style="left:984px;top:306px;width:16px;height:2.5px;background:#22d422;"></div>
<div style="left:1005px;top:306px;width:65px;height:2.5px;background:#22d422;"></div>
<div style="left:1070px;top:260px;width:15px;height:407px;background:#232323;"></div>
<svg style="position:absolute;left:1072px;top:292px;" width="12" height="15" viewBox="0 0 12 15"><path d="M0.5 0.5h11v9l-5.5 5-5.5-5z" fill="#c8c8c8"/></svg>
<svg style="position:absolute;left:1070px;top:310px;" width="15" height="14" viewBox="0 0 15 14"><path d="M1 5l6-4h7v7H7z" fill="none" stroke="#c8c8c8" stroke-width="1.3"/><rect x="7" y="1" width="7" height="7" fill="#c8c8c8"/><circle cx="5.5" cy="9.5" r="3" fill="#232323" stroke="#c8c8c8" stroke-width="1.3"/></svg>
<div style="left:1071px;top:330px;width:12px;height:157px;background:#2e2e2e;border-radius:6px;"></div>
<div style="left:0px;top:310px;width:725px;height:4.4px;background:#2d2d2d;"></div>
<div style="left:6px;top:310px;width:11px;height:3px;background:#a9a5d6;"></div>
<div style="left:51px;top:310px;width:12px;height:3.5px;background:#0c0c0c;"></div>
<div style="left:52.5px;top:310px;width:9px;height:2px;background:#8ab8f0;"></div>
<div style="left:0;top:0;width:1920px;height:667px;clip-path:polygon(0 310px,724px 310px,724px 314px,0 314px)">
<div style="left:69px;top:302.70px;font-size:10.4px;line-height:10.4px;color:#c2c2c2;font-weight:normal;font-family:'Liberation Sans', sans-serif;white-space:nowrap;">[Gradient_Smoothing.png]</div>
<div style="left:341px;top:300px;width:61px;height:13px;background:#1d1d1d;"></div>
<div style="left:347px;top:303.34px;font-size:10px;line-height:10px;color:#c4c4c4;font-weight:normal;font-family:'Liberation Sans', sans-serif;white-space:nowrap;">Normal</div>
<div style="left:423px;top:300px;width:58px;height:13px;background:#1d1d1d;"></div>
<div style="left:429px;top:303.34px;font-size:10px;line-height:10px;color:#c4c4c4;font-weight:normal;font-family:'Liberation Sans', sans-serif;white-space:nowrap;">None</div>
<div style="left:628px;top:300px;width:79px;height:13px;background:#1d1d1d;"></div>
<div style="left:634px;top:303.34px;font-size:10px;line-height:10px;color:#c4c4c4;font-weight:normal;font-family:'Liberation Sans', sans-serif;white-space:nowrap;">None</div>
</div>
<div style="left:727px;top:310px;width:49px;height:4.4px;background:#3a3a3a;"></div>
<div style="left:776px;top:310px;width:294px;height:4px;background:#8d89a6;"></div>
<div style="left:776px;top:310px;width:294px;height:1px;background:#a9a5c8;"></div>
<div style="left:0px;top:313.9px;width:1070px;height:1px;background:#1a1a1a;"></div>
<div style="left:0px;top:314.4px;width:725px;height:15px;background:#2d2d2d;"></div>
<div style="left:0px;top:328.5px;width:725px;height:1px;background:#1a1a1a;"></div>
<div style="left:6px;top:316.4px;width:11px;height:11px;background:#c23b3b;"></div>
<div style="left:25px;top:316.94px;font-size:10px;line-height:10px;color:#c0c0c0;font-weight:normal;font-family:'Liberation Sans', sans-serif;white-space:nowrap;">2</div>
<div style="left:51px;top:315.9px;width:12px;height:12px;background:#0c0c0c;border-radius:2px;"></div>
<div style="left:52.5px;top:317.4px;width:9px;height:9px;background:#ffffff;"></div>
<div style="left:69px;top:317.80px;font-size:10.4px;line-height:10.4px;color:#c2c2c2;font-weight:normal;font-family:'Liberation Sans', sans-serif;white-space:nowrap;">line_controller</div>
<div style="left:281px;top:316.0px;width:11.5px;height:11.2px;background:#222222;"></div>
<div style="left:321.3px;top:316.0px;width:11.3px;height:11.2px;background:#232323;"></div>
<div style="left:341px;top:315.4px;width:61px;height:13px;background:#1d1d1d;"></div>
<div style="left:347px;top:317.54px;font-size:10px;line-height:10px;color:#c4c4c4;font-weight:normal;font-family:'Liberation Sans', sans-serif;white-space:nowrap;">Normal</div>
<svg style="position:absolute;left:391px;top:319.9px;" width="8" height="5" viewBox="0 0 8 5"><path d="M0.5 0.8l3.5 3.2 3.5-3.2" fill="none" stroke="#b0b0b0" stroke-width="1.1"/></svg>
<div style="left:406px;top:316.0px;width:11.5px;height:11.2px;background:#252525;"></div>
<div style="left:423px;top:315.4px;width:58px;height:13px;background:#1d1d1d;"></div>
<div style="left:429px;top:317.54px;font-size:10px;line-height:10px;color:#c4c4c4;font-weight:normal;font-family:'Liberation Sans', sans-serif;white-space:nowrap;">None</div>
<svg style="position:absolute;left:470px;top:319.9px;" width="8" height="5" viewBox="0 0 8 5"><path d="M0.5 0.8l3.5 3.2 3.5-3.2" fill="none" stroke="#b0b0b0" stroke-width="1.1"/></svg>
<div style="left:489px;top:316.0px;width:11.5px;height:11.2px;background:#232323;"></div>
<svg style="position:absolute;left:489px;top:316.9px;" width="12" height="11" viewBox="0 0 12 11"><path d="M2 6.6V4.2a4 3.6 0 0 1 8 0v2.4z" fill="#d6d6d6"/><rect x="5" y="5" width="2" height="4.2" fill="#d6d6d6"/><rect x="0.3" y="6.9" width="11.4" height="1.4" fill="#d6d6d6"/><circle cx="4.4" cy="3.8" r="0.8" fill="#1a1a1a"/><circle cx="7.6" cy="3.8" r="0.8" fill="#1a1a1a"/></svg>
<div style="left:502px;top:316.0px;width:11.5px;height:11.2px;background:#232323;"></div>
<div style="left:515px;top:316.0px;width:11.5px;height:11.2px;background:#232323;"></div>
<svg style="position:absolute;left:516px;top:316.4px;" width="11" height="11" viewBox="0 0 11 11"><path d="M1 10L10 1" stroke="#d0d0d0" stroke-width="1.2"/></svg>
<div style="left:528px;top:316.0px;width:11.5px;height:11.2px;background:#232323;"></div>
<div style="left:529px;top:315.74px;font-size:12px;line-height:12px;color:#c8c8c8;font-weight:normal;font-family:'Liberation Serif', serif;white-space:nowrap;"><i>fx</i></div>
<div style="left:556px;top:316.0px;width:11.5px;height:11.2px;background:#232323;"></div>
<div style="left:569px;top:316.0px;width:11.5px;height:11.2px;background:#232323;"></div>
<div style="left:582px;top:316.0px;width:11.5px;height:11.2px;background:#232323;"></div>
<svg style="position:absolute;left:611px;top:315.9px;" width="12" height="12" viewBox="0 0 12 12"><path d="M9.9 2.6A4.9 4.9 0 1 1 6 1.3 3.2 3.2 0 0 1 8.9 5.8 2.1 2.1 0 0 1 5.3 6.9 1.2 1.2 0 0 1 6.3 5.2" fill="none" stroke="#c8c8c8" stroke-width="1.25"/></svg>
<div style="left:628px;top:315.4px;width:79px;height:13px;background:#1d1d1d;"></div>
<div style="left:634px;top:317.54px;font-size:10px;line-height:10px;color:#c4c4c4;font-weight:normal;font-family:'Liberation Sans', sans-serif;white-space:nowrap;">None</div>
<svg style="position:absolute;left:696px;top:319.9px;" width="8" height="5" viewBox="0 0 8 5"><path d="M0.5 0.8l3.5 3.2 3.5-3.2" fill="none" stroke="#b0b0b0" stroke-width="1.1"/></svg>
<div style="left:727px;top:314.4px;width:49px;height:15px;background:#3a3a3a;"></div>
<div style="left:727px;top:314.4px;width:4px;height:15px;background:#353535;"></div>
<div style="left:727px;top:328.5px;width:343px;height:1px;background:#232323;"></div>
<div style="left:0px;top:329.5px;width:725px;height:15px;background:#2d2d2d;"></div>
<div style="left:0px;top:343.6px;width:725px;height:1px;background:#1a1a1a;"></div>
<div style="left:6px;top:331.5px;width:11px;height:11px;background:#f0a020;"></div>
<div style="left:25px;top:332.04px;font-size:10px;line-height:10px;color:#c0c0c0;font-weight:normal;font-family:'Liberation Sans', sans-serif;white-space:nowrap;">3</div>
<div style="left:51px;top:331.0px;width:12px;height:12px;background:#0c0c0c;border-radius:2px;"></div>
<div style="left:52.5px;top:332.5px;width:9px;height:9px;background:#ffffff;"></div>
<div style="left:69px;top:332.90px;font-size:10.4px;line-height:10.4px;color:#c2c2c2;font-weight:normal;font-family:'Liberation Sans', sans-serif;white-space:nowrap;">line: Path 1 [1.1.0]</div>
<div style="left:281px;top:331.1px;width:11.5px;height:11.2px;background:#222222;"></div>
<svg style="position:absolute;left:281px;top:331.5px;" width="12" height="10" viewBox="0 0 12 10"><path d="M0.6 5C2.8 1.5 9.2 1.5 11.4 5 9.2 8.5 2.8 8.5 0.6 5z" fill="#e2e2e2"/><circle cx="6" cy="5" r="1.9" fill="#1e1e1e"/><circle cx="6.6" cy="4.4" r="0.5" fill="#bbb"/></svg>
<div style="left:308px;top:331.1px;width:11.3px;height:11.2px;background:#232323;"></div>
<div style="left:321.3px;top:331.1px;width:11.3px;height:11.2px;background:#232323;"></div>
<div style="left:341px;top:330.5px;width:61px;height:13px;background:#1d1d1d;"></div>
<div style="left:347px;top:332.64px;font-size:10px;line-height:10px;color:#c4c4c4;font-weight:normal;font-family:'Liberation Sans', sans-serif;white-space:nowrap;">Normal</div>
<svg style="position:absolute;left:391px;top:335.0px;" width="8" height="5" viewBox="0 0 8 5"><path d="M0.5 0.8l3.5 3.2 3.5-3.2" fill="none" stroke="#b0b0b0" stroke-width="1.1"/></svg>
<div style="left:406px;top:331.1px;width:11.5px;height:11.2px;background:#252525;"></div>
<div style="left:423px;top:330.5px;width:58px;height:13px;background:#1d1d1d;"></div>
<div style="left:429px;top:332.64px;font-size:10px;line-height:10px;color:#c4c4c4;font-weight:normal;font-family:'Liberation Sans', sans-serif;white-space:nowrap;">None</div>
<svg style="position:absolute;left:470px;top:335.0px;" width="8" height="5" viewBox="0 0 8 5"><path d="M0.5 0.8l3.5 3.2 3.5-3.2" fill="none" stroke="#b0b0b0" stroke-width="1.1"/></svg>
<div style="left:489px;top:331.1px;width:11.5px;height:11.2px;background:#232323;"></div>
<svg style="position:absolute;left:489px;top:332.0px;" width="12" height="11" viewBox="0 0 12 11"><path d="M2 6.6V4.2a4 3.6 0 0 1 8 0v2.4z" fill="#d6d6d6"/><rect x="5" y="5" width="2" height="4.2" fill="#d6d6d6"/><rect x="0.3" y="6.9" width="11.4" height="1.4" fill="#d6d6d6"/><circle cx="4.4" cy="3.8" r="0.8" fill="#1a1a1a"/><circle cx="7.6" cy="3.8" r="0.8" fill="#1a1a1a"/></svg>
<div style="left:502px;top:331.1px;width:11.5px;height:11.2px;background:#232323;"></div>
<div style="left:515px;top:331.1px;width:11.5px;height:11.2px;background:#232323;"></div>
<svg style="position:absolute;left:516px;top:331.5px;" width="11" height="11" viewBox="0 0 11 11"><path d="M1 10L10 1" stroke="#d0d0d0" stroke-width="1.2"/></svg>
<div style="left:556px;top:331.1px;width:11.5px;height:11.2px;background:#232323;"></div>
<div style="left:569px;top:331.1px;width:11.5px;height:11.2px;background:#232323;"></div>
<div style="left:582px;top:331.1px;width:11.5px;height:11.2px;background:#232323;"></div>
<svg style="position:absolute;left:611px;top:331.0px;" width="12" height="12" viewBox="0 0 12 12"><path d="M9.9 2.6A4.9 4.9 0 1 1 6 1.3 3.2 3.2 0 0 1 8.9 5.8 2.1 2.1 0 0 1 5.3 6.9 1.2 1.2 0 0 1 6.3 5.2" fill="none" stroke="#c8c8c8" stroke-width="1.25"/></svg>
<div style="left:628px;top:330.5px;width:79px;height:13px;background:#1d1d1d;"></div>
<div style="left:634px;top:332.64px;font-size:10px;line-height:10px;color:#c4c4c4;font-weight:normal;font-family:'Liberation Sans', sans-serif;white-space:nowrap;">None</div>
<svg style="position:absolute;left:696px;top:335.0px;" width="8" height="5" viewBox="0 0 8 5"><path d="M0.5 0.8l3.5 3.2 3.5-3.2" fill="none" stroke="#b0b0b0" stroke-width="1.1"/></svg>
<div style="left:727px;top:329.5px;width:49px;height:15px;background:#3a3a3a;"></div>
<div style="left:727px;top:329.5px;width:4px;height:15px;background:#353535;"></div>
<div style="left:727px;top:343.6px;width:343px;height:1px;background:#232323;"></div>
<div style="left:0px;top:344.6px;width:725px;height:15px;background:#2d2d2d;"></div>
<div style="left:0px;top:358.70000000000005px;width:725px;height:1px;background:#1a1a1a;"></div>
<div style="left:6px;top:346.6px;width:11px;height:11px;background:#f0a020;"></div>
<div style="left:25px;top:347.14px;font-size:10px;line-height:10px;color:#c0c0c0;font-weight:normal;font-family:'Liberation Sans', sans-serif;white-space:nowrap;">4</div>
<div style="left:51px;top:346.1px;width:12px;height:12px;background:#0c0c0c;border-radius:2px;"></div>
<div style="left:52.5px;top:347.6px;width:9px;height:9px;background:#ffffff;"></div>
<div style="left:69px;top:348.00px;font-size:10.4px;line-height:10.4px;color:#c2c2c2;font-weight:normal;font-family:'Liberation Sans', sans-serif;white-space:nowrap;">line: Path 1 [1.1.1]</div>
<div style="left:281px;top:346.20000000000005px;width:11.5px;height:11.2px;background:#222222;"></div>
<svg style="position:absolute;left:281px;top:346.6px;" width="12" height="10" viewBox="0 0 12 10"><path d="M0.6 5C2.8 1.5 9.2 1.5 11.4 5 9.2 8.5 2.8 8.5 0.6 5z" fill="#e2e2e2"/><circle cx="6" cy="5" r="1.9" fill="#1e1e1e"/><circle cx="6.6" cy="4.4" r="0.5" fill="#bbb"/></svg>
<div style="left:308px;top:346.20000000000005px;width:11.3px;height:11.2px;background:#232323;"></div>
<div style="left:321.3px;top:346.20000000000005px;width:11.3px;height:11.2px;background:#232323;"></div>
<div style="left:341px;top:345.6px;width:61px;height:13px;background:#1d1d1d;"></div>
<div style="left:347px;top:347.74px;font-size:10px;line-height:10px;color:#c4c4c4;font-weight:normal;font-family:'Liberation Sans', sans-serif;white-space:nowrap;">Normal</div>
<svg style="position:absolute;left:391px;top:350.1px;" width="8" height="5" viewBox="0 0 8 5"><path d="M0.5 0.8l3.5 3.2 3.5-3.2" fill="none" stroke="#b0b0b0" stroke-width="1.1"/></svg>
<div style="left:406px;top:346.20000000000005px;width:11.5px;height:11.2px;background:#252525;"></div>
<div style="left:423px;top:345.6px;width:58px;height:13px;background:#1d1d1d;"></div>
<div style="left:429px;top:347.74px;font-size:10px;line-height:10px;color:#c4c4c4;font-weight:normal;font-family:'Liberation Sans', sans-serif;white-space:nowrap;">None</div>
<svg style="position:absolute;left:470px;top:350.1px;" width="8" height="5" viewBox="0 0 8 5"><path d="M0.5 0.8l3.5 3.2 3.5-3.2" fill="none" stroke="#b0b0b0" stroke-width="1.1"/></svg>
<div style="left:489px;top:346.20000000000005px;width:11.5px;height:11.2px;background:#232323;"></div>
<svg style="position:absolute;left:489px;top:347.1px;" width="12" height="11" viewBox="0 0 12 11"><path d="M2 6.6V4.2a4 3.6 0 0 1 8 0v2.4z" fill="#d6d6d6"/><rect x="5" y="5" width="2" height="4.2" fill="#d6d6d6"/><rect x="0.3" y="6.9" width="11.4" height="1.4" fill="#d6d6d6"/><circle cx="4.4" cy="3.8" r="0.8" fill="#1a1a1a"/><circle cx="7.6" cy="3.8" r="0.8" fill="#1a1a1a"/></svg>
<div style="left:502px;top:346.20000000000005px;width:11.5px;height:11.2px;background:#232323;"></div>
<div style="left:515px;top:346.20000000000005px;width:11.5px;height:11.2px;background:#232323;"></div>
<svg style="position:absolute;left:516px;top:346.6px;" width="11" height="11" viewBox="0 0 11 11"><path d="M1 10L10 1" stroke="#d0d0d0" stroke-width="1.2"/></svg>
<div style="left:556px;top:346.20000000000005px;width:11.5px;height:11.2px;background:#232323;"></div>
<div style="left:569px;top:346.20000000000005px;width:11.5px;height:11.2px;background:#232323;"></div>
<div style="left:582px;top:346.20000000000005px;width:11.5px;height:11.2px;background:#232323;"></div>
<svg style="position:absolute;left:611px;top:346.1px;" width="12" height="12" viewBox="0 0 12 12"><path d="M9.9 2.6A4.9 4.9 0 1 1 6 1.3 3.2 3.2 0 0 1 8.9 5.8 2.1 2.1 0 0 1 5.3 6.9 1.2 1.2 0 0 1 6.3 5.2" fill="none" stroke="#c8c8c8" stroke-width="1.25"/></svg>
<div style="left:628px;top:345.6px;width:79px;height:13px;background:#1d1d1d;"></div>
<div style="left:634px;top:347.74px;font-size:10px;line-height:10px;color:#c4c4c4;font-weight:normal;font-family:'Liberation Sans', sans-serif;white-space:nowrap;">None</div>
<svg style="position:absolute;left:696px;top:350.1px;" width="8" height="5" viewBox="0 0 8 5"><path d="M0.5 0.8l3.5 3.2 3.5-3.2" fill="none" stroke="#b0b0b0" stroke-width="1.1"/></svg>
<div style="left:727px;top:344.6px;width:49px;height:15px;background:#3a3a3a;"></div>
<div style="left:727px;top:344.6px;width:4px;height:15px;background:#353535;"></div>
<div style="left:727px;top:358.70000000000005px;width:343px;height:1px;background:#232323;"></div>
<div style="left:0px;top:359.70000000000005px;width:725px;height:15px;background:#444444;"></div>
<div style="left:0px;top:373.80000000000007px;width:725px;height:1px;background:#1a1a1a;"></div>
<div style="left:6px;top:361.70000000000005px;width:11px;height:11px;background:#f0a020;"></div>
<div style="left:25px;top:362.24px;font-size:10px;line-height:10px;color:#c0c0c0;font-weight:normal;font-family:'Liberation Sans', sans-serif;white-space:nowrap;">5</div>
<div style="left:51px;top:361.20000000000005px;width:12px;height:12px;background:#0c0c0c;border-radius:2px;"></div>
<div style="left:52.5px;top:362.70000000000005px;width:9px;height:9px;background:#ffffff;"></div>
<div style="left:66px;top:360.20000000000005px;width:210px;height:13.5px;background:#a6a6a6;"></div>
<div style="left:69px;top:363.10px;font-size:10.4px;line-height:10.4px;color:#1c1c1c;font-weight:normal;font-family:'Liberation Sans', sans-serif;white-space:nowrap;">line: Path 1 [1.1.2]</div>
<div style="left:281px;top:361.30000000000007px;width:11.5px;height:11.2px;background:#333333;"></div>
<svg style="position:absolute;left:281px;top:361.70000000000005px;" width="12" height="10" viewBox="0 0 12 10"><path d="M0.6 5C2.8 1.5 9.2 1.5 11.4 5 9.2 8.5 2.8 8.5 0.6 5z" fill="#e2e2e2"/><circle cx="6" cy="5" r="1.9" fill="#1e1e1e"/><circle cx="6.6" cy="4.4" r="0.5" fill="#bbb"/></svg>
<div style="left:294px;top:360.70000000000005px;width:12px;height:13px;background:#484848;"></div>
<div style="left:308px;top:361.30000000000007px;width:11.3px;height:11.2px;background:#393939;"></div>
<div style="left:321.3px;top:361.30000000000007px;width:11.3px;height:11.2px;background:#393939;"></div>
<div style="left:341px;top:360.70000000000005px;width:61px;height:13px;background:#1d1d1d;"></div>
<div style="left:347px;top:362.84px;font-size:10px;line-height:10px;color:#c4c4c4;font-weight:normal;font-family:'Liberation Sans', sans-serif;white-space:nowrap;">Normal</div>
<svg style="position:absolute;left:391px;top:365.20000000000005px;" width="8" height="5" viewBox="0 0 8 5"><path d="M0.5 0.8l3.5 3.2 3.5-3.2" fill="none" stroke="#b0b0b0" stroke-width="1.1"/></svg>
<div style="left:406px;top:361.30000000000007px;width:11.5px;height:11.2px;background:#2f2f2f;"></div>
<div style="left:402px;top:360.20000000000005px;width:4px;height:14px;background:#474747;"></div>
<div style="left:418px;top:360.20000000000005px;width:4px;height:14px;background:#474747;"></div>
<div style="left:423px;top:360.70000000000005px;width:58px;height:13px;background:#1d1d1d;"></div>
<div style="left:429px;top:362.84px;font-size:10px;line-height:10px;color:#c4c4c4;font-weight:normal;font-family:'Liberation Sans', sans-serif;white-space:nowrap;">None</div>
<svg style="position:absolute;left:470px;top:365.20000000000005px;" width="8" height="5" viewBox="0 0 8 5"><path d="M0.5 0.8l3.5 3.2 3.5-3.2" fill="none" stroke="#b0b0b0" stroke-width="1.1"/></svg>
<div style="left:485px;top:360.20000000000005px;width:121px;height:14px;background:#474747;"></div>
<div style="left:489px;top:361.30000000000007px;width:11.5px;height:11.2px;background:#353535;"></div>
<svg style="position:absolute;left:489px;top:362.20000000000005px;" width="12" height="11" viewBox="0 0 12 11"><path d="M2 6.6V4.2a4 3.6 0 0 1 8 0v2.4z" fill="#d6d6d6"/><rect x="5" y="5" width="2" height="4.2" fill="#d6d6d6"/><rect x="0.3" y="6.9" width="11.4" height="1.4" fill="#d6d6d6"/><circle cx="4.4" cy="3.8" r="0.8" fill="#1a1a1a"/><circle cx="7.6" cy="3.8" r="0.8" fill="#1a1a1a"/></svg>
<div style="left:502px;top:361.30000000000007px;width:11.5px;height:11.2px;background:#383838;"></div>
<div style="left:515px;top:361.30000000000007px;width:11.5px;height:11.2px;background:#383838;"></div>
<svg style="position:absolute;left:516px;top:361.70000000000005px;" width="11" height="11" viewBox="0 0 11 11"><path d="M1 10L10 1" stroke="#d0d0d0" stroke-width="1.2"/></svg>
<div style="left:556px;top:361.30000000000007px;width:11.5px;height:11.2px;background:#3a3a3a;"></div>
<div style="left:569px;top:361.30000000000007px;width:11.5px;height:11.2px;background:#3a3a3a;"></div>
<div style="left:582px;top:361.30000000000007px;width:11.5px;height:11.2px;background:#3a3a3a;"></div>
<svg style="position:absolute;left:611px;top:361.20000000000005px;" width="12" height="12" viewBox="0 0 12 12"><path d="M9.9 2.6A4.9 4.9 0 1 1 6 1.3 3.2 3.2 0 0 1 8.9 5.8 2.1 2.1 0 0 1 5.3 6.9 1.2 1.2 0 0 1 6.3 5.2" fill="none" stroke="#c8c8c8" stroke-width="1.25"/></svg>
<div style="left:628px;top:360.70000000000005px;width:79px;height:13px;background:#1d1d1d;"></div>
<div style="left:634px;top:362.84px;font-size:10px;line-height:10px;color:#c4c4c4;font-weight:normal;font-family:'Liberation Sans', sans-serif;white-space:nowrap;">None</div>
<svg style="position:absolute;left:696px;top:365.20000000000005px;" width="8" height="5" viewBox="0 0 8 5"><path d="M0.5 0.8l3.5 3.2 3.5-3.2" fill="none" stroke="#b0b0b0" stroke-width="1.1"/></svg>
<div style="left:727px;top:359.70000000000005px;width:49px;height:15px;background:#464646;"></div>
<div style="left:727px;top:359.70000000000005px;width:4px;height:15px;background:#404040;"></div>
<div style="left:727px;top:373.80000000000007px;width:343px;height:1px;background:#232323;"></div>
<div style="left:0px;top:374.80000000000007px;width:725px;height:15px;background:#444444;"></div>
<div style="left:0px;top:388.9000000000001px;width:725px;height:1px;background:#1a1a1a;"></div>
<div style="left:6px;top:376.80000000000007px;width:11px;height:11px;background:#f0a020;"></div>
<div style="left:25px;top:377.34px;font-size:10px;line-height:10px;color:#c0c0c0;font-weight:normal;font-family:'Liberation Sans', sans-serif;white-space:nowrap;">6</div>
<div style="left:51px;top:376.30000000000007px;width:12px;height:12px;background:#0c0c0c;border-radius:2px;"></div>
<div style="left:52.5px;top:377.80000000000007px;width:9px;height:9px;background:#ffffff;"></div>
<div style="left:66px;top:375.30000000000007px;width:210px;height:13.5px;background:#a6a6a6;"></div>
<div style="left:69px;top:378.20px;font-size:10.4px;line-height:10.4px;color:#1c1c1c;font-weight:normal;font-family:'Liberation Sans', sans-serif;white-space:nowrap;">line: Path 1 [1.1.3]</div>
<div style="left:281px;top:376.4000000000001px;width:11.5px;height:11.2px;background:#333333;"></div>
<svg style="position:absolute;left:281px;top:376.80000000000007px;" width="12" height="10" viewBox="0 0 12 10"><path d="M0.6 5C2.8 1.5 9.2 1.5 11.4 5 9.2 8.5 2.8 8.5 0.6 5z" fill="#e2e2e2"/><circle cx="6" cy="5" r="1.9" fill="#1e1e1e"/><circle cx="6.6" cy="4.4" r="0.5" fill="#bbb"/></svg>
<div style="left:294px;top:375.80000000000007px;width:12px;height:13px;background:#484848;"></div>
<div style="left:308px;top:376.4000000000001px;width:11.3px;height:11.2px;background:#393939;"></div>
<div style="left:321.3px;top:376.4000000000001px;width:11.3px;height:11.2px;background:#393939;"></div>
<div style="left:341px;top:375.80000000000007px;width:61px;height:13px;background:#1d1d1d;"></div>
<div style="left:347px;top:377.94px;font-size:10px;line-height:10px;color:#c4c4c4;font-weight:normal;font-family:'Liberation Sans', sans-serif;white-space:nowrap;">Normal</div>
<svg style="position:absolute;left:391px;top:380.30000000000007px;" width="8" height="5" viewBox="0 0 8 5"><path d="M0.5 0.8l3.5 3.2 3.5-3.2" fill="none" stroke="#b0b0b0" stroke-width="1.1"/></svg>
<div style="left:406px;top:376.4000000000001px;width:11.5px;height:11.2px;background:#2f2f2f;"></div>
<div style="left:402px;top:375.30000000000007px;width:4px;height:14px;background:#474747;"></div>
<div style="left:418px;top:375.30000000000007px;width:4px;height:14px;background:#474747;"></div>
<div style="left:423px;top:375.80000000000007px;width:58px;height:13px;background:#1d1d1d;"></div>
<div style="left:429px;top:377.94px;font-size:10px;line-height:10px;color:#c4c4c4;font-weight:normal;font-family:'Liberation Sans', sans-serif;white-space:nowrap;">None</div>
<svg style="position:absolute;left:470px;top:380.30000000000007px;" width="8" height="5" viewBox="0 0 8 5"><path d="M0.5 0.8l3.5 3.2 3.5-3.2" fill="none" stroke="#b0b0b0" stroke-width="1.1"/></svg>
<div style="left:485px;top:375.30000000000007px;width:121px;height:14px;background:#474747;"></div>
<div style="left:489px;top:376.4000000000001px;width:11.5px;height:11.2px;background:#353535;"></div>
<svg style="position:absolute;left:489px;top:377.30000000000007px;" width="12" height="11" viewBox="0 0 12 11"><path d="M2 6.6V4.2a4 3.6 0 0 1 8 0v2.4z" fill="#d6d6d6"/><rect x="5" y="5" width="2" height="4.2" fill="#d6d6d6"/><rect x="0.3" y="6.9" width="11.4" height="1.4" fill="#d6d6d6"/><circle cx="4.4" cy="3.8" r="0.8" fill="#1a1a1a"/><circle cx="7.6" cy="3.8" r="0.8" fill="#1a1a1a"/></svg>
<div style="left:502px;top:376.4000000000001px;width:11.5px;height:11.2px;background:#383838;"></div>
<div style="left:515px;top:376.4000000000001px;width:11.5px;height:11.2px;background:#383838;"></div>
<svg style="position:absolute;left:516px;top:376.80000000000007px;" width="11" height="11" viewBox="0 0 11 11"><path d="M1 10L10 1" stroke="#d0d0d0" stroke-width="1.2"/></svg>
<div style="left:556px;top:376.4000000000001px;width:11.5px;height:11.2px;background:#3a3a3a;"></div>
<div style="left:569px;top:376.4000000000001px;width:11.5px;height:11.2px;background:#3a3a3a;"></div>
<div style="left:582px;top:376.4000000000001px;width:11.5px;height:11.2px;background:#3a3a3a;"></div>
<svg style="position:absolute;left:611px;top:376.30000000000007px;" width="12" height="12" viewBox="0 0 12 12"><path d="M9.9 2.6A4.9 4.9 0 1 1 6 1.3 3.2 3.2 0 0 1 8.9 5.8 2.1 2.1 0 0 1 5.3 6.9 1.2 1.2 0 0 1 6.3 5.2" fill="none" stroke="#c8c8c8" stroke-width="1.25"/></svg>
<div style="left:628px;top:375.80000000000007px;width:79px;height:13px;background:#1d1d1d;"></div>
<div style="left:634px;top:377.94px;font-size:10px;line-height:10px;color:#c4c4c4;font-weight:normal;font-family:'Liberation Sans', sans-serif;white-space:nowrap;">None</div>
<svg style="position:absolute;left:696px;top:380.30000000000007px;" width="8" height="5" viewBox="0 0 8 5"><path d="M0.5 0.8l3.5 3.2 3.5-3.2" fill="none" stroke="#b0b0b0" stroke-width="1.1"/></svg>
<div style="left:727px;top:374.80000000000007px;width:49px;height:15px;background:#464646;"></div>
<div style="left:727px;top:374.80000000000007px;width:4px;height:15px;background:#404040;"></div>
<div style="left:727px;top:388.9000000000001px;width:343px;height:1px;background:#232323;"></div>
<div style="left:0px;top:389.9000000000001px;width:725px;height:15px;background:#444444;"></div>
<div style="left:0px;top:404.0000000000001px;width:725px;height:1px;background:#1a1a1a;"></div>
<div style="left:6px;top:391.9000000000001px;width:11px;height:11px;background:#f0a020;"></div>
<div style="left:25px;top:392.44px;font-size:10px;line-height:10px;color:#c0c0c0;font-weight:normal;font-family:'Liberation Sans', sans-serif;white-space:nowrap;">7</div>
<div style="left:51px;top:391.4000000000001px;width:12px;height:12px;background:#0c0c0c;border-radius:2px;"></div>
<div style="left:52.5px;top:392.9000000000001px;width:9px;height:9px;background:#ffffff;"></div>
<div style="left:66px;top:390.4000000000001px;width:210px;height:13.5px;background:#a6a6a6;"></div>
<div style="left:69px;top:393.30px;font-size:10.4px;line-height:10.4px;color:#1c1c1c;font-weight:normal;font-family:'Liberation Sans', sans-serif;white-space:nowrap;">line: Path 1 [1.1.4]</div>
<div style="left:281px;top:391.5000000000001px;width:11.5px;height:11.2px;background:#333333;"></div>
<svg style="position:absolute;left:281px;top:391.9000000000001px;" width="12" height="10" viewBox="0 0 12 10"><path d="M0.6 5C2.8 1.5 9.2 1.5 11.4 5 9.2 8.5 2.8 8.5 0.6 5z" fill="#e2e2e2"/><circle cx="6" cy="5" r="1.9" fill="#1e1e1e"/><circle cx="6.6" cy="4.4" r="0.5" fill="#bbb"/></svg>
<div style="left:294px;top:390.9000000000001px;width:12px;height:13px;background:#484848;"></div>
<div style="left:308px;top:391.5000000000001px;width:11.3px;height:11.2px;background:#393939;"></div>
<div style="left:321.3px;top:391.5000000000001px;width:11.3px;height:11.2px;background:#393939;"></div>
<div style="left:341px;top:390.9000000000001px;width:61px;height:13px;background:#1d1d1d;"></div>
<div style="left:347px;top:393.04px;font-size:10px;line-height:10px;color:#c4c4c4;font-weight:normal;font-family:'Liberation Sans', sans-serif;white-space:nowrap;">Normal</div>
<svg style="position:absolute;left:391px;top:395.4000000000001px;" width="8" height="5" viewBox="0 0 8 5"><path d="M0.5 0.8l3.5 3.2 3.5-3.2" fill="none" stroke="#b0b0b0" stroke-width="1.1"/></svg>
<div style="left:406px;top:391.5000000000001px;width:11.5px;height:11.2px;background:#2f2f2f;"></div>
<div style="left:402px;top:390.4000000000001px;width:4px;height:14px;background:#474747;"></div>
<div style="left:418px;top:390.4000000000001px;width:4px;height:14px;background:#474747;"></div>
<div style="left:423px;top:390.9000000000001px;width:58px;height:13px;background:#1d1d1d;"></div>
<div style="left:429px;top:393.04px;font-size:10px;line-height:10px;color:#c4c4c4;font-weight:normal;font-family:'Liberation Sans', sans-serif;white-space:nowrap;">None</div>
<svg style="position:absolute;left:470px;top:395.4000000000001px;" width="8" height="5" viewBox="0 0 8 5"><path d="M0.5 0.8l3.5 3.2 3.5-3.2" fill="none" stroke="#b0b0b0" stroke-width="1.1"/></svg>
<div style="left:485px;top:390.4000000000001px;width:121px;height:14px;background:#474747;"></div>
<div style="left:489px;top:391.5000000000001px;width:11.5px;height:11.2px;background:#353535;"></div>
<svg style="position:absolute;left:489px;top:392.4000000000001px;" width="12" height="11" viewBox="0 0 12 11"><path d="M2 6.6V4.2a4 3.6 0 0 1 8 0v2.4z" fill="#d6d6d6"/><rect x="5" y="5" width="2" height="4.2" fill="#d6d6d6"/><rect x="0.3" y="6.9" width="11.4" height="1.4" fill="#d6d6d6"/><circle cx="4.4" cy="3.8" r="0.8" fill="#1a1a1a"/><circle cx="7.6" cy="3.8" r="0.8" fill="#1a1a1a"/></svg>
<div style="left:502px;top:391.5000000000001px;width:11.5px;height:11.2px;background:#383838;"></div>
<div style="left:515px;top:391.5000000000001px;width:11.5px;height:11.2px;background:#383838;"></div>
<svg style="position:absolute;left:516px;top:391.9000000000001px;" width="11" height="11" viewBox="0 0 11 11"><path d="M1 10L10 1" stroke="#d0d0d0" stroke-width="1.2"/></svg>
<div style="left:556px;top:391.5000000000001px;width:11.5px;height:11.2px;background:#3a3a3a;"></div>
<div style="left:569px;top:391.5000000000001px;width:11.5px;height:11.2px;background:#3a3a3a;"></div>
<div style="left:582px;top:391.5000000000001px;width:11.5px;height:11.2px;background:#3a3a3a;"></div>
<svg style="position:absolute;left:611px;top:391.4000000000001px;" width="12" height="12" viewBox="0 0 12 12"><path d="M9.9 2.6A4.9 4.9 0 1 1 6 1.3 3.2 3.2 0 0 1 8.9 5.8 2.1 2.1 0 0 1 5.3 6.9 1.2 1.2 0 0 1 6.3 5.2" fill="none" stroke="#c8c8c8" stroke-width="1.25"/></svg>
<div style="left:628px;top:390.9000000000001px;width:79px;height:13px;background:#1d1d1d;"></div>
<div style="left:634px;top:393.04px;font-size:10px;line-height:10px;color:#c4c4c4;font-weight:normal;font-family:'Liberation Sans', sans-serif;white-space:nowrap;">None</div>
<svg style="position:absolute;left:696px;top:395.4000000000001px;" width="8" height="5" viewBox="0 0 8 5"><path d="M0.5 0.8l3.5 3.2 3.5-3.2" fill="none" stroke="#b0b0b0" stroke-width="1.1"/></svg>
<div style="left:727px;top:389.9000000000001px;width:49px;height:15px;background:#464646;"></div>
<div style="left:727px;top:389.9000000000001px;width:4px;height:15px;background:#404040;"></div>
<div style="left:727px;top:404.0000000000001px;width:343px;height:1px;background:#232323;"></div>
<div style="left:0px;top:405.0000000000001px;width:725px;height:15.1px;background:#232323;"></div>
<div style="left:0px;top:419.10000000000014px;width:725px;height:1px;background:#1a1a1a;"></div>
<div style="left:727px;top:405.0000000000001px;width:343px;height:15.1px;background:#333333;"></div>
<div style="left:727px;top:405.0000000000001px;width:4px;height:15.1px;background:#2e2e2e;"></div>
<div style="left:727px;top:418.8000000000001px;width:343px;height:1.3px;background:#262626;"></div>
<svg style="position:absolute;left:11px;top:410.5000000000001px;" width="8" height="5" viewBox="0 0 8 5"><path d="M0.5 0.8l3.5 3.2 3.5-3.2" fill="none" stroke="#a8a8a8" stroke-width="1.1"/></svg>
<div style="left:26px;top:408.54px;font-size:10px;line-height:10px;color:#b4b4b4;font-weight:normal;font-family:'Liberation Sans', sans-serif;white-space:nowrap;">Transform</div>
<div style="left:490px;top:408.04px;font-size:10px;line-height:10px;color:#3a8ee6;font-weight:normal;font-family:'Liberation Sans', sans-serif;white-space:nowrap;">Reset</div>
<div style="left:0px;top:420.10000000000014px;width:725px;height:15.1px;background:#232323;"></div>
<div style="left:0px;top:434.20000000000016px;width:725px;height:1px;background:#1a1a1a;"></div>
<div style="left:727px;top:420.10000000000014px;width:343px;height:15.1px;background:#333333;"></div>
<div style="left:727px;top:420.10000000000014px;width:4px;height:15.1px;background:#2e2e2e;"></div>
<div style="left:727px;top:433.90000000000015px;width:343px;height:1.3px;background:#262626;"></div>
<div style="left:28px;top:427.10000000000014px;width:1px;height:1px;background:#555;"></div>
<svg style="position:absolute;left:38px;top:421.70000000000016px;" width="11" height="12" viewBox="0 0 11 12"><circle cx="5.5" cy="6.6" r="4.3" fill="none" stroke="#c8c8c8" stroke-width="1.3"/><path d="M3.6 0.9h3.8M5.5 0.9v1.5" stroke="#c8c8c8" stroke-width="1.3"/></svg>
<div style="left:55px;top:423.64px;font-size:10px;line-height:10px;color:#b4b4b4;font-weight:normal;font-family:'Liberation Sans', sans-serif;white-space:nowrap;">Anchor Point</div>
<div style="left:490px;top:423.14px;font-size:10px;line-height:10px;color:#3a8ee6;font-weight:normal;font-family:'Liberation Sans', sans-serif;white-space:nowrap;letter-spacing:-0.2px;">0.0<span style='position:relative;top:2px'>,</span>0.0</div>
<svg style="position:absolute;left:622px;top:421.60000000000014px;" width="12" height="12" viewBox="0 0 12 12"><path d="M9.9 2.6A4.9 4.9 0 1 1 6 1.3 3.2 3.2 0 0 1 8.9 5.8 2.1 2.1 0 0 1 5.3 6.9 1.2 1.2 0 0 1 6.3 5.2" fill="none" stroke="#c8c8c8" stroke-width="1.25"/></svg>
<div style="left:0px;top:435.20000000000016px;width:725px;height:15.1px;background:#232323;"></div>
<div style="left:0px;top:449.3000000000002px;width:725px;height:1px;background:#1a1a1a;"></div>
<div style="left:727px;top:435.20000000000016px;width:343px;height:15.1px;background:#333333;"></div>
<div style="left:727px;top:435.20000000000016px;width:4px;height:15.1px;background:#2e2e2e;"></div>
<div style="left:727px;top:449.00000000000017px;width:343px;height:1.3px;background:#262626;"></div>
<div style="left:28px;top:442.20000000000016px;width:1px;height:1px;background:#555;"></div>
<svg style="position:absolute;left:26px;top:440.70000000000016px;" width="8" height="5" viewBox="0 0 8 5"><path d="M0.5 0.8l3.5 3.2 3.5-3.2" fill="none" stroke="#a8a8a8" stroke-width="1.1"/></svg>
<svg style="position:absolute;left:38px;top:436.8000000000002px;" width="11" height="12" viewBox="0 0 11 12"><circle cx="5.5" cy="6.6" r="4.3" fill="none" stroke="#c8c8c8" stroke-width="1.3"/><path d="M3.6 0.9h3.8M5.5 0.9v1.5" stroke="#c8c8c8" stroke-width="1.3"/></svg>
<div style="left:55px;top:438.74px;font-size:10px;line-height:10px;color:#b4b4b4;font-weight:normal;font-family:'Liberation Sans', sans-serif;white-space:nowrap;">Position</div>
<div style="left:490px;top:438.24px;font-size:10px;line-height:10px;color:#cc3a3a;font-weight:normal;font-family:'Liberation Sans', sans-serif;white-space:nowrap;letter-spacing:-0.2px;">714.0<span style='position:relative;top:2px'>,</span>750.2</div>
<svg style="position:absolute;left:622px;top:436.70000000000016px;" width="12" height="12" viewBox="0 0 12 12"><path d="M9.9 2.6A4.9 4.9 0 1 1 6 1.3 3.2 3.2 0 0 1 8.9 5.8 2.1 2.1 0 0 1 5.3 6.9 1.2 1.2 0 0 1 6.3 5.2" fill="none" stroke="#c8c8c8" stroke-width="1.25"/></svg>
<div style="left:0px;top:450.3000000000002px;width:725px;height:48.4px;background:#232323;"></div>
<div style="left:0px;top:497.70000000000016px;width:725px;height:1px;background:#1a1a1a;"></div>
<div style="left:727px;top:450.3000000000002px;width:343px;height:48.4px;background:#333333;"></div>
<div style="left:727px;top:450.3000000000002px;width:4px;height:48.4px;background:#2e2e2e;"></div>
<div style="left:727px;top:497.40000000000015px;width:343px;height:1.3px;background:#262626;"></div>
<div style="left:43px;top:474.3000000000002px;width:1px;height:1px;background:#555;"></div>
<div style="left:56px;top:470.34px;font-size:10px;line-height:10px;color:#b4b4b4;font-weight:normal;font-family:'Liberation Sans', sans-serif;white-space:nowrap;">Expression: Position</div>
<div style="left:503px;top:451.3000000000002px;width:12.5px;height:13px;background:#1a1a1a;"></div>
<svg style="position:absolute;left:505px;top:454.3000000000002px;" width="9" height="7" viewBox="0 0 9 7"><path d="M0 1.2h9M0 5.3h9" stroke="#3a96f0" stroke-width="1.8"/></svg>
<svg style="position:absolute;left:519px;top:452.3000000000002px;" width="12" height="12" viewBox="0 0 12 12"><path d="M1 1v10h10" fill="none" stroke="#c8c8c8" stroke-width="1.1"/><path d="M3 4l2 4 2-3 1.5 1.5L10 4" fill="none" stroke="#c8c8c8" stroke-width="1"/></svg>
<svg style="position:absolute;left:534px;top:451.8000000000002px;" width="12" height="12" viewBox="0 0 12 12"><path d="M9.9 2.6A4.9 4.9 0 1 1 6 1.3 3.2 3.2 0 0 1 8.9 5.8 2.1 2.1 0 0 1 5.3 6.9 1.2 1.2 0 0 1 6.3 5.2" fill="none" stroke="#c8c8c8" stroke-width="1.25"/></svg>
<svg style="position:absolute;left:550px;top:452.3000000000002px;" width="12" height="12" viewBox="0 0 12 12"><circle cx="6" cy="6" r="5.5" fill="#d8d8d8"/><path d="M4.5 3.2v5.6L8.8 6z" fill="#232323"/></svg>
<div style="left:738px;top:454.07px;font-size:10.9px;line-height:10.9px;color:#b4b4b4;font-weight:normal;font-family:'Liberation Mono', monospace;white-space:nowrap;">org=value;</div>
<div style="left:738px;top:467.47px;font-size:10.9px;line-height:10.9px;color:#b4b4b4;font-weight:normal;font-family:'Liberation Mono', monospace;white-space:nowrap;">temp=wiggle (5,50);</div>
<div style="left:738px;top:480.87px;font-size:10.9px;line-height:10.9px;color:#b4b4b4;font-weight:normal;font-family:'Liberation Mono', monospace;white-space:nowrap;">[org[0],temp[1]];</div>
<div style="left:0px;top:498.70000000000016px;width:725px;height:15.1px;background:#232323;"></div>
<div style="left:0px;top:512.8000000000002px;width:725px;height:1px;background:#1a1a1a;"></div>
<div style="left:727px;top:498.70000000000016px;width:343px;height:15.1px;background:#333333;"></div>
<div style="left:727px;top:498.70000000000016px;width:4px;height:15.1px;background:#2e2e2e;"></div>
<div style="left:727px;top:512.5000000000002px;width:343px;height:1.3px;background:#262626;"></div>
<div style="left:28px;top:505.70000000000016px;width:1px;height:1px;background:#555;"></div>
<svg style="position:absolute;left:38px;top:500.3000000000002px;" width="11" height="12" viewBox="0 0 11 12"><circle cx="5.5" cy="6.6" r="4.3" fill="none" stroke="#c8c8c8" stroke-width="1.3"/><path d="M3.6 0.9h3.8M5.5 0.9v1.5" stroke="#c8c8c8" stroke-width="1.3"/></svg>
<div style="left:55px;top:502.24px;font-size:10px;line-height:10px;color:#b4b4b4;font-weight:normal;font-family:'Liberation Sans', sans-serif;white-space:nowrap;">Scale</div>
<div style="left:488px;top:499.70000000000016px;width:12.5px;height:13px;background:#1a1a1a;"></div>
<svg style="position:absolute;left:489px;top:502.70000000000016px;" width="11" height="7" viewBox="0 0 11 7"><rect x="0.6" y="1" width="5.5" height="4.5" rx="2.2" fill="none" stroke="#d0d0d0" stroke-width="1.2"/><rect x="4.8" y="1" width="5.5" height="4.5" rx="2.2" fill="none" stroke="#d0d0d0" stroke-width="1.2"/></svg>
<div style="left:505px;top:501.74px;font-size:10px;line-height:10px;color:#3a8ee6;font-weight:normal;font-family:'Liberation Sans', sans-serif;white-space:nowrap;letter-spacing:-0.2px;">100.0<span style='position:relative;top:2px'>,</span>100.0<span style='color:#a0a0a0'> %</span></div>
<svg style="position:absolute;left:622px;top:500.20000000000016px;" width="12" height="12" viewBox="0 0 12 12"><path d="M9.9 2.6A4.9 4.9 0 1 1 6 1.3 3.2 3.2 0 0 1 8.9 5.8 2.1 2.1 0 0 1 5.3 6.9 1.2 1.2 0 0 1 6.3 5.2" fill="none" stroke="#c8c8c8" stroke-width="1.25"/></svg>
<div style="left:0px;top:513.8000000000002px;width:725px;height:15.1px;background:#232323;"></div>
<div style="left:0px;top:527.9000000000002px;width:725px;height:1px;background:#1a1a1a;"></div>
<div style="left:727px;top:513.8000000000002px;width:343px;height:15.1px;background:#333333;"></div>
<div style="left:727px;top:513.8000000000002px;width:4px;height:15.1px;background:#2e2e2e;"></div>
<div style="left:727px;top:527.6000000000003px;width:343px;height:1.3px;background:#262626;"></div>
<div style="left:28px;top:520.8000000000002px;width:1px;height:1px;background:#555;"></div>
<svg style="position:absolute;left:38px;top:515.4000000000002px;" width="11" height="12" viewBox="0 0 11 12"><circle cx="5.5" cy="6.6" r="4.3" fill="none" stroke="#c8c8c8" stroke-width="1.3"/><path d="M3.6 0.9h3.8M5.5 0.9v1.5" stroke="#c8c8c8" stroke-width="1.3"/></svg>
<div style="left:55px;top:517.34px;font-size:10px;line-height:10px;color:#b4b4b4;font-weight:normal;font-family:'Liberation Sans', sans-serif;white-space:nowrap;">Rotation</div>
<div style="left:490px;top:516.84px;font-size:10px;line-height:10px;color:#3a8ee6;font-weight:normal;font-family:'Liberation Sans', sans-serif;white-space:nowrap;">0<span style='color:#a0a0a0'>x</span>+0.0<span style='color:#a0a0a0;font-size:8px;position:relative;top:-2px'>°</span></div>
<svg style="position:absolute;left:622px;top:515.3000000000002px;" width="12" height="12" viewBox="0 0 12 12"><path d="M9.9 2.6A4.9 4.9 0 1 1 6 1.3 3.2 3.2 0 0 1 8.9 5.8 2.1 2.1 0 0 1 5.3 6.9 1.2 1.2 0 0 1 6.3 5.2" fill="none" stroke="#c8c8c8" stroke-width="1.25"/></svg>
<div style="left:0px;top:528.9000000000002px;width:725px;height:15.1px;background:#232323;"></div>
<div style="left:0px;top:543.0000000000002px;width:725px;height:1px;background:#1a1a1a;"></div>
<div style="left:727px;top:528.9000000000002px;width:343px;height:15.1px;background:#333333;"></div>
<div style="left:727px;top:528.9000000000002px;width:4px;height:15.1px;background:#2e2e2e;"></div>
<div style="left:727px;top:542.7000000000003px;width:343px;height:1.3px;background:#262626;"></div>
<div style="left:28px;top:535.9000000000002px;width:1px;height:1px;background:#555;"></div>
<svg style="position:absolute;left:38px;top:530.5000000000002px;" width="11" height="12" viewBox="0 0 11 12"><circle cx="5.5" cy="6.6" r="4.3" fill="none" stroke="#c8c8c8" stroke-width="1.3"/><path d="M3.6 0.9h3.8M5.5 0.9v1.5" stroke="#c8c8c8" stroke-width="1.3"/></svg>
<div style="left:55px;top:532.44px;font-size:10px;line-height:10px;color:#b4b4b4;font-weight:normal;font-family:'Liberation Sans', sans-serif;white-space:nowrap;">Opacity</div>
<div style="left:490px;top:531.94px;font-size:10px;line-height:10px;color:#3a8ee6;font-weight:normal;font-family:'Liberation Sans', sans-serif;white-space:nowrap;">0<span style='color:#a0a0a0'> %</span></div>
<svg style="position:absolute;left:622px;top:530.4000000000002px;" width="12" height="12" viewBox="0 0 12 12"><path d="M9.9 2.6A4.9 4.9 0 1 1 6 1.3 3.2 3.2 0 0 1 8.9 5.8 2.1 2.1 0 0 1 5.3 6.9 1.2 1.2 0 0 1 6.3 5.2" fill="none" stroke="#c8c8c8" stroke-width="1.25"/></svg>
<div style="left:0px;top:544.0000000000002px;width:725px;height:15px;background:#444444;"></div>
<div style="left:0px;top:558.1000000000003px;width:725px;height:1px;background:#1a1a1a;"></div>
<div style="left:6px;top:546.0000000000002px;width:11px;height:11px;background:#f0a020;"></div>
<div style="left:25px;top:546.54px;font-size:10px;line-height:10px;color:#c0c0c0;font-weight:normal;font-family:'Liberation Sans', sans-serif;white-space:nowrap;">8</div>
<div style="left:51px;top:545.5000000000002px;width:12px;height:12px;background:#0c0c0c;border-radius:2px;"></div>
<div style="left:52.5px;top:547.0000000000002px;width:9px;height:9px;background:#ffffff;"></div>
<div style="left:66px;top:544.5000000000002px;width:210px;height:13.5px;background:#a6a6a6;"></div>
<div style="left:69px;top:547.40px;font-size:10.4px;line-height:10.4px;color:#1c1c1c;font-weight:normal;font-family:'Liberation Sans', sans-serif;white-space:nowrap;">line: Path 1 [1.1.5]</div>
<div style="left:281px;top:545.6000000000003px;width:11.5px;height:11.2px;background:#333333;"></div>
<svg style="position:absolute;left:281px;top:546.0000000000002px;" width="12" height="10" viewBox="0 0 12 10"><path d="M0.6 5C2.8 1.5 9.2 1.5 11.4 5 9.2 8.5 2.8 8.5 0.6 5z" fill="#e2e2e2"/><circle cx="6" cy="5" r="1.9" fill="#1e1e1e"/><circle cx="6.6" cy="4.4" r="0.5" fill="#bbb"/></svg>
<div style="left:294px;top:545.0000000000002px;width:12px;height:13px;background:#484848;"></div>
<div style="left:308px;top:545.6000000000003px;width:11.3px;height:11.2px;background:#393939;"></div>
<div style="left:321.3px;top:545.6000000000003px;width:11.3px;height:11.2px;background:#393939;"></div>
<div style="left:341px;top:545.0000000000002px;width:61px;height:13px;background:#1d1d1d;"></div>
<div style="left:347px;top:547.14px;font-size:10px;line-height:10px;color:#c4c4c4;font-weight:normal;font-family:'Liberation Sans', sans-serif;white-space:nowrap;">Normal</div>
<svg style="position:absolute;left:391px;top:549.5000000000002px;" width="8" height="5" viewBox="0 0 8 5"><path d="M0.5 0.8l3.5 3.2 3.5-3.2" fill="none" stroke="#b0b0b0" stroke-width="1.1"/></svg>
<div style="left:406px;top:545.6000000000003px;width:11.5px;height:11.2px;background:#2f2f2f;"></div>
<div style="left:402px;top:544.5000000000002px;width:4px;height:14px;background:#474747;"></div>
<div style="left:418px;top:544.5000000000002px;width:4px;height:14px;background:#474747;"></div>
<div style="left:423px;top:545.0000000000002px;width:58px;height:13px;background:#1d1d1d;"></div>
<div style="left:429px;top:547.14px;font-size:10px;line-height:10px;color:#c4c4c4;font-weight:normal;font-family:'Liberation Sans', sans-serif;white-space:nowrap;">None</div>
<svg style="position:absolute;left:470px;top:549.5000000000002px;" width="8" height="5" viewBox="0 0 8 5"><path d="M0.5 0.8l3.5 3.2 3.5-3.2" fill="none" stroke="#b0b0b0" stroke-width="1.1"/></svg>
<div style="left:485px;top:544.5000000000002px;width:121px;height:14px;background:#474747;"></div>
<div style="left:489px;top:545.6000000000003px;width:11.5px;height:11.2px;background:#353535;"></div>
<svg style="position:absolute;left:489px;top:546.5000000000002px;" width="12" height="11" viewBox="0 0 12 11"><path d="M2 6.6V4.2a4 3.6 0 0 1 8 0v2.4z" fill="#d6d6d6"/><rect x="5" y="5" width="2" height="4.2" fill="#d6d6d6"/><rect x="0.3" y="6.9" width="11.4" height="1.4" fill="#d6d6d6"/><circle cx="4.4" cy="3.8" r="0.8" fill="#1a1a1a"/><circle cx="7.6" cy="3.8" r="0.8" fill="#1a1a1a"/></svg>
<div style="left:502px;top:545.6000000000003px;width:11.5px;height:11.2px;background:#383838;"></div>
<div style="left:515px;top:545.6000000000003px;width:11.5px;height:11.2px;background:#383838;"></div>
<svg style="position:absolute;left:516px;top:546.0000000000002px;" width="11" height="11" viewBox="0 0 11 11"><path d="M1 10L10 1" stroke="#d0d0d0" stroke-width="1.2"/></svg>
<div style="left:556px;top:545.6000000000003px;width:11.5px;height:11.2px;background:#3a3a3a;"></div>
<div style="left:569px;top:545.6000000000003px;width:11.5px;height:11.2px;background:#3a3a3a;"></div>
<div style="left:582px;top:545.6000000000003px;width:11.5px;height:11.2px;background:#3a3a3a;"></div>
<svg style="position:absolute;left:611px;top:545.5000000000002px;" width="12" height="12" viewBox="0 0 12 12"><path d="M9.9 2.6A4.9 4.9 0 1 1 6 1.3 3.2 3.2 0 0 1 8.9 5.8 2.1 2.1 0 0 1 5.3 6.9 1.2 1.2 0 0 1 6.3 5.2" fill="none" stroke="#c8c8c8" stroke-width="1.25"/></svg>
<div style="left:628px;top:545.0000000000002px;width:79px;height:13px;background:#1d1d1d;"></div>
<div style="left:634px;top:547.14px;font-size:10px;line-height:10px;color:#c4c4c4;font-weight:normal;font-family:'Liberation Sans', sans-serif;white-space:nowrap;">None</div>
<svg style="position:absolute;left:696px;top:549.5000000000002px;" width="8" height="5" viewBox="0 0 8 5"><path d="M0.5 0.8l3.5 3.2 3.5-3.2" fill="none" stroke="#b0b0b0" stroke-width="1.1"/></svg>
<div style="left:727px;top:544.0000000000002px;width:49px;height:15px;background:#464646;"></div>
<div style="left:727px;top:544.0000000000002px;width:4px;height:15px;background:#404040;"></div>
<div style="left:727px;top:558.1000000000003px;width:343px;height:1px;background:#232323;"></div>
<div style="left:0px;top:559.1000000000003px;width:725px;height:15px;background:#444444;"></div>
<div style="left:0px;top:573.2000000000003px;width:725px;height:1px;background:#1a1a1a;"></div>
<div style="left:6px;top:561.1000000000003px;width:11px;height:11px;background:#f0a020;"></div>
<div style="left:25px;top:561.64px;font-size:10px;line-height:10px;color:#c0c0c0;font-weight:normal;font-family:'Liberation Sans', sans-serif;white-space:nowrap;">9</div>
<div style="left:51px;top:560.6000000000003px;width:12px;height:12px;background:#0c0c0c;border-radius:2px;"></div>
<div style="left:52.5px;top:562.1000000000003px;width:9px;height:9px;background:#ffffff;"></div>
<div style="left:66px;top:559.6000000000003px;width:210px;height:13.5px;background:#a6a6a6;"></div>
<div style="left:69px;top:562.50px;font-size:10.4px;line-height:10.4px;color:#1c1c1c;font-weight:normal;font-family:'Liberation Sans', sans-serif;white-space:nowrap;">line: Path 1 [1.1.6]</div>
<div style="left:281px;top:560.7000000000003px;width:11.5px;height:11.2px;background:#333333;"></div>
<svg style="position:absolute;left:281px;top:561.1000000000003px;" width="12" height="10" viewBox="0 0 12 10"><path d="M0.6 5C2.8 1.5 9.2 1.5 11.4 5 9.2 8.5 2.8 8.5 0.6 5z" fill="#e2e2e2"/><circle cx="6" cy="5" r="1.9" fill="#1e1e1e"/><circle cx="6.6" cy="4.4" r="0.5" fill="#bbb"/></svg>
<div style="left:294px;top:560.1000000000003px;width:12px;height:13px;background:#484848;"></div>
<div style="left:308px;top:560.7000000000003px;width:11.3px;height:11.2px;background:#393939;"></div>
<div style="left:321.3px;top:560.7000000000003px;width:11.3px;height:11.2px;background:#393939;"></div>
<div style="left:341px;top:560.1000000000003px;width:61px;height:13px;background:#1d1d1d;"></div>
<div style="left:347px;top:562.24px;font-size:10px;line-height:10px;color:#c4c4c4;font-weight:normal;font-family:'Liberation Sans', sans-serif;white-space:nowrap;">Normal</div>
<svg style="position:absolute;left:391px;top:564.6000000000003px;" width="8" height="5" viewBox="0 0 8 5"><path d="M0.5 0.8l3.5 3.2 3.5-3.2" fill="none" stroke="#b0b0b0" stroke-width="1.1"/></svg>
<div style="left:406px;top:560.7000000000003px;width:11.5px;height:11.2px;background:#2f2f2f;"></div>
<div style="left:402px;top:559.6000000000003px;width:4px;height:14px;background:#474747;"></div>
<div style="left:418px;top:559.6000000000003px;width:4px;height:14px;background:#474747;"></div>
<div style="left:423px;top:560.1000000000003px;width:58px;height:13px;background:#1d1d1d;"></div>
<div style="left:429px;top:562.24px;font-size:10px;line-height:10px;color:#c4c4c4;font-weight:normal;font-family:'Liberation Sans', sans-serif;white-space:nowrap;">None</div>
<svg style="position:absolute;left:470px;top:564.6000000000003px;" width="8" height="5" viewBox="0 0 8 5"><path d="M0.5 0.8l3.5 3.2 3.5-3.2" fill="none" stroke="#b0b0b0" stroke-width="1.1"/></svg>
<div style="left:485px;top:559.6000000000003px;width:121px;height:14px;background:#474747;"></div>
<div style="left:489px;top:560.7000000000003px;width:11.5px;height:11.2px;background:#353535;"></div>
<svg style="position:absolute;left:489px;top:561.6000000000003px;" width="12" height="11" viewBox="0 0 12 11"><path d="M2 6.6V4.2a4 3.6 0 0 1 8 0v2.4z" fill="#d6d6d6"/><rect x="5" y="5" width="2" height="4.2" fill="#d6d6d6"/><rect x="0.3" y="6.9" width="11.4" height="1.4" fill="#d6d6d6"/><circle cx="4.4" cy="3.8" r="0.8" fill="#1a1a1a"/><circle cx="7.6" cy="3.8" r="0.8" fill="#1a1a1a"/></svg>
<div style="left:502px;top:560.7000000000003px;width:11.5px;height:11.2px;background:#383838;"></div>
<div style="left:515px;top:560.7000000000003px;width:11.5px;height:11.2px;background:#383838;"></div>
<svg style="position:absolute;left:516px;top:561.1000000000003px;" width="11" height="11" viewBox="0 0 11 11"><path d="M1 10L10 1" stroke="#d0d0d0" stroke-width="1.2"/></svg>
<div style="left:556px;top:560.7000000000003px;width:11.5px;height:11.2px;background:#3a3a3a;"></div>
<div style="left:569px;top:560.7000000000003px;width:11.5px;height:11.2px;background:#3a3a3a;"></div>
<div style="left:582px;top:560.7000000000003px;width:11.5px;height:11.2px;background:#3a3a3a;"></div>
<svg style="position:absolute;left:611px;top:560.6000000000003px;" width="12" height="12" viewBox="0 0 12 12"><path d="M9.9 2.6A4.9 4.9 0 1 1 6 1.3 3.2 3.2 0 0 1 8.9 5.8 2.1 2.1 0 0 1 5.3 6.9 1.2 1.2 0 0 1 6.3 5.2" fill="none" stroke="#c8c8c8" stroke-width="1.25"/></svg>
<div style="left:628px;top:560.1000000000003px;width:79px;height:13px;background:#1d1d1d;"></div>
<div style="left:634px;top:562.24px;font-size:10px;line-height:10px;color:#c4c4c4;font-weight:normal;font-family:'Liberation Sans', sans-serif;white-space:nowrap;">None</div>
<svg style="position:absolute;left:696px;top:564.6000000000003px;" width="8" height="5" viewBox="0 0 8 5"><path d="M0.5 0.8l3.5 3.2 3.5-3.2" fill="none" stroke="#b0b0b0" stroke-width="1.1"/></svg>
<div style="left:727px;top:559.1000000000003px;width:49px;height:15px;background:#464646;"></div>
<div style="left:727px;top:559.1000000000003px;width:4px;height:15px;background:#404040;"></div>
<div style="left:727px;top:573.2000000000003px;width:343px;height:1px;background:#232323;"></div>
<div style="left:0px;top:574.2000000000003px;width:725px;height:15px;background:#2d2d2d;"></div>
<div style="left:0px;top:588.3000000000003px;width:725px;height:1px;background:#1a1a1a;"></div>
<div style="left:6px;top:576.2000000000003px;width:11px;height:11px;background:#f0a020;"></div>
<div style="left:23px;top:576.74px;font-size:10px;line-height:10px;color:#c0c0c0;font-weight:normal;font-family:'Liberation Sans', sans-serif;white-space:nowrap;">10</div>
<div style="left:51px;top:575.7000000000003px;width:12px;height:12px;background:#0c0c0c;border-radius:2px;"></div>
<div style="left:52.5px;top:577.2000000000003px;width:9px;height:9px;background:#ffffff;"></div>
<div style="left:69px;top:577.60px;font-size:10.4px;line-height:10.4px;color:#c2c2c2;font-weight:normal;font-family:'Liberation Sans', sans-serif;white-space:nowrap;">line: Path 1 [1.1.7]</div>
<div style="left:281px;top:575.8000000000003px;width:11.5px;height:11.2px;background:#222222;"></div>
<svg style="position:absolute;left:281px;top:576.2000000000003px;" width="12" height="10" viewBox="0 0 12 10"><path d="M0.6 5C2.8 1.5 9.2 1.5 11.4 5 9.2 8.5 2.8 8.5 0.6 5z" fill="#e2e2e2"/><circle cx="6" cy="5" r="1.9" fill="#1e1e1e"/><circle cx="6.6" cy="4.4" r="0.5" fill="#bbb"/></svg>
<div style="left:308px;top:575.8000000000003px;width:11.3px;height:11.2px;background:#232323;"></div>
<div style="left:321.3px;top:575.8000000000003px;width:11.3px;height:11.2px;background:#232323;"></div>
<div style="left:341px;top:575.2000000000003px;width:61px;height:13px;background:#1d1d1d;"></div>
<div style="left:347px;top:577.34px;font-size:10px;line-height:10px;color:#c4c4c4;font-weight:normal;font-family:'Liberation Sans', sans-serif;white-space:nowrap;">Normal</div>
<svg style="position:absolute;left:391px;top:579.7000000000003px;" width="8" height="5" viewBox="0 0 8 5"><path d="M0.5 0.8l3.5 3.2 3.5-3.2" fill="none" stroke="#b0b0b0" stroke-width="1.1"/></svg>
<div style="left:406px;top:575.8000000000003px;width:11.5px;height:11.2px;background:#252525;"></div>
<div style="left:423px;top:575.2000000000003px;width:58px;height:13px;background:#1d1d1d;"></div>
<div style="left:429px;top:577.34px;font-size:10px;line-height:10px;color:#c4c4c4;font-weight:normal;font-family:'Liberation Sans', sans-serif;white-space:nowrap;">None</div>
<svg style="position:absolute;left:470px;top:579.7000000000003px;" width="8" height="5" viewBox="0 0 8 5"><path d="M0.5 0.8l3.5 3.2 3.5-3.2" fill="none" stroke="#b0b0b0" stroke-width="1.1"/></svg>
<div style="left:489px;top:575.8000000000003px;width:11.5px;height:11.2px;background:#232323;"></div>
<svg style="position:absolute;left:489px;top:576.7000000000003px;" width="12" height="11" viewBox="0 0 12 11"><path d="M2 6.6V4.2a4 3.6 0 0 1 8 0v2.4z" fill="#d6d6d6"/><rect x="5" y="5" width="2" height="4.2" fill="#d6d6d6"/><rect x="0.3" y="6.9" width="11.4" height="1.4" fill="#d6d6d6"/><circle cx="4.4" cy="3.8" r="0.8" fill="#1a1a1a"/><circle cx="7.6" cy="3.8" r="0.8" fill="#1a1a1a"/></svg>
<div style="left:502px;top:575.8000000000003px;width:11.5px;height:11.2px;background:#232323;"></div>
<div style="left:515px;top:575.8000000000003px;width:11.5px;height:11.2px;background:#232323;"></div>
<svg style="position:absolute;left:516px;top:576.2000000000003px;" width="11" height="11" viewBox="0 0 11 11"><path d="M1 10L10 1" stroke="#d0d0d0" stroke-width="1.2"/></svg>
<div style="left:556px;top:575.8000000000003px;width:11.5px;height:11.2px;background:#232323;"></div>
<div style="left:569px;top:575.8000000000003px;width:11.5px;height:11.2px;background:#232323;"></div>
<div style="left:582px;top:575.8000000000003px;width:11.5px;height:11.2px;background:#232323;"></div>
<svg style="position:absolute;left:611px;top:575.7000000000003px;" width="12" height="12" viewBox="0 0 12 12"><path d="M9.9 2.6A4.9 4.9 0 1 1 6 1.3 3.2 3.2 0 0 1 8.9 5.8 2.1 2.1 0 0 1 5.3 6.9 1.2 1.2 0 0 1 6.3 5.2" fill="none" stroke="#c8c8c8" stroke-width="1.25"/></svg>
<div style="left:628px;top:575.2000000000003px;width:79px;height:13px;background:#1d1d1d;"></div>
<div style="left:634px;top:577.34px;font-size:10px;line-height:10px;color:#c4c4c4;font-weight:normal;font-family:'Liberation Sans', sans-serif;white-space:nowrap;">None</div>
<svg style="position:absolute;left:696px;top:579.7000000000003px;" width="8" height="5" viewBox="0 0 8 5"><path d="M0.5 0.8l3.5 3.2 3.5-3.2" fill="none" stroke="#b0b0b0" stroke-width="1.1"/></svg>
<div style="left:727px;top:574.2000000000003px;width:49px;height:15px;background:#3a3a3a;"></div>
<div style="left:727px;top:574.2000000000003px;width:4px;height:15px;background:#353535;"></div>
<div style="left:727px;top:588.3000000000003px;width:343px;height:1px;background:#232323;"></div>
<div style="left:0px;top:589.3000000000003px;width:725px;height:15px;background:#2d2d2d;"></div>
<div style="left:0px;top:603.4000000000003px;width:725px;height:1px;background:#1a1a1a;"></div>
<div style="left:6px;top:591.3000000000003px;width:11px;height:11px;background:#f0a020;"></div>
<div style="left:23px;top:591.84px;font-size:10px;line-height:10px;color:#c0c0c0;font-weight:normal;font-family:'Liberation Sans', sans-serif;white-space:nowrap;">11</div>
<div style="left:51px;top:590.8000000000003px;width:12px;height:12px;background:#0c0c0c;border-radius:2px;"></div>
<div style="left:52.5px;top:592.3000000000003px;width:9px;height:9px;background:#ffffff;"></div>
<div style="left:69px;top:592.70px;font-size:10.4px;line-height:10.4px;color:#c2c2c2;font-weight:normal;font-family:'Liberation Sans', sans-serif;white-space:nowrap;">line: Path 1 [1.1.8]</div>
<div style="left:281px;top:590.9000000000003px;width:11.5px;height:11.2px;background:#222222;"></div>
<svg style="position:absolute;left:281px;top:591.3000000000003px;" width="12" height="10" viewBox="0 0 12 10"><path d="M0.6 5C2.8 1.5 9.2 1.5 11.4 5 9.2 8.5 2.8 8.5 0.6 5z" fill="#e2e2e2"/><circle cx="6" cy="5" r="1.9" fill="#1e1e1e"/><circle cx="6.6" cy="4.4" r="0.5" fill="#bbb"/></svg>
<div style="left:308px;top:590.9000000000003px;width:11.3px;height:11.2px;background:#232323;"></div>
<div style="left:321.3px;top:590.9000000000003px;width:11.3px;height:11.2px;background:#232323;"></div>
<div style="left:341px;top:590.3000000000003px;width:61px;height:13px;background:#1d1d1d;"></div>
<div style="left:347px;top:592.44px;font-size:10px;line-height:10px;color:#c4c4c4;font-weight:normal;font-family:'Liberation Sans', sans-serif;white-space:nowrap;">Normal</div>
<svg style="position:absolute;left:391px;top:594.8000000000003px;" width="8" height="5" viewBox="0 0 8 5"><path d="M0.5 0.8l3.5 3.2 3.5-3.2" fill="none" stroke="#b0b0b0" stroke-width="1.1"/></svg>
<div style="left:406px;top:590.9000000000003px;width:11.5px;height:11.2px;background:#252525;"></div>
<div style="left:423px;top:590.3000000000003px;width:58px;height:13px;background:#1d1d1d;"></div>
<div style="left:429px;top:592.44px;font-size:10px;line-height:10px;color:#c4c4c4;font-weight:normal;font-family:'Liberation Sans', sans-serif;white-space:nowrap;">None</div>
<svg style="position:absolute;left:470px;top:594.8000000000003px;" width="8" height="5" viewBox="0 0 8 5"><path d="M0.5 0.8l3.5 3.2 3.5-3.2" fill="none" stroke="#b0b0b0" stroke-width="1.1"/></svg>
<div style="left:489px;top:590.9000000000003px;width:11.5px;height:11.2px;background:#232323;"></div>
<svg style="position:absolute;left:489px;top:591.8000000000003px;" width="12" height="11" viewBox="0 0 12 11"><path d="M2 6.6V4.2a4 3.6 0 0 1 8 0v2.4z" fill="#d6d6d6"/><rect x="5" y="5" width="2" height="4.2" fill="#d6d6d6"/><rect x="0.3" y="6.9" width="11.4" height="1.4" fill="#d6d6d6"/><circle cx="4.4" cy="3.8" r="0.8" fill="#1a1a1a"/><circle cx="7.6" cy="3.8" r="0.8" fill="#1a1a1a"/></svg>
<div style="left:502px;top:590.9000000000003px;width:11.5px;height:11.2px;background:#232323;"></div>
<div style="left:515px;top:590.9000000000003px;width:11.5px;height:11.2px;background:#232323;"></div>
<svg style="position:absolute;left:516px;top:591.3000000000003px;" width="11" height="11" viewBox="0 0 11 11"><path d="M1 10L10 1" stroke="#d0d0d0" stroke-width="1.2"/></svg>
<div style="left:556px;top:590.9000000000003px;width:11.5px;height:11.2px;background:#232323;"></div>
<div style="left:569px;top:590.9000000000003px;width:11.5px;height:11.2px;background:#232323;"></div>
<div style="left:582px;top:590.9000000000003px;width:11.5px;height:11.2px;background:#232323;"></div>
<svg style="position:absolute;left:611px;top:590.8000000000003px;" width="12" height="12" viewBox="0 0 12 12"><path d="M9.9 2.6A4.9 4.9 0 1 1 6 1.3 3.2 3.2 0 0 1 8.9 5.8 2.1 2.1 0 0 1 5.3 6.9 1.2 1.2 0 0 1 6.3 5.2" fill="none" stroke="#c8c8c8" stroke-width="1.25"/></svg>
<div style="left:628px;top:590.3000000000003px;width:79px;height:13px;background:#1d1d1d;"></div>
<div style="left:634px;top:592.44px;font-size:10px;line-height:10px;color:#c4c4c4;font-weight:normal;font-family:'Liberation Sans', sans-serif;white-space:nowrap;">None</div>
<svg style="position:absolute;left:696px;top:594.8000000000003px;" width="8" height="5" viewBox="0 0 8 5"><path d="M0.5 0.8l3.5 3.2 3.5-3.2" fill="none" stroke="#b0b0b0" stroke-width="1.1"/></svg>
<div style="left:727px;top:589.3000000000003px;width:49px;height:15px;background:#3a3a3a;"></div>
<div style="left:727px;top:589.3000000000003px;width:4px;height:15px;background:#353535;"></div>
<div style="left:727px;top:603.4000000000003px;width:343px;height:1px;background:#232323;"></div>
<div style="left:0px;top:604.4000000000003px;width:725px;height:15.1px;background:#232323;"></div>
<div style="left:0px;top:618.5000000000003px;width:725px;height:1px;background:#1a1a1a;"></div>
<div style="left:727px;top:604.4000000000003px;width:343px;height:15.1px;background:#333333;"></div>
<div style="left:727px;top:604.4000000000003px;width:4px;height:15.1px;background:#2e2e2e;"></div>
<div style="left:727px;top:618.2000000000004px;width:343px;height:1.3px;background:#262626;"></div>
<svg style="position:absolute;left:11px;top:609.9000000000003px;" width="8" height="5" viewBox="0 0 8 5"><path d="M0.5 0.8l3.5 3.2 3.5-3.2" fill="none" stroke="#a8a8a8" stroke-width="1.1"/></svg>
<div style="left:26px;top:607.94px;font-size:10px;line-height:10px;color:#b4b4b4;font-weight:normal;font-family:'Liberation Sans', sans-serif;white-space:nowrap;">Transform</div>
<div style="left:490px;top:607.44px;font-size:10px;line-height:10px;color:#3a8ee6;font-weight:normal;font-family:'Liberation Sans', sans-serif;white-space:nowrap;">Reset</div>
<div style="left:0px;top:619.5000000000003px;width:725px;height:15.1px;background:#232323;"></div>
<div style="left:0px;top:633.6000000000004px;width:725px;height:1px;background:#1a1a1a;"></div>
<div style="left:727px;top:619.5000000000003px;width:343px;height:15.1px;background:#333333;"></div>
<div style="left:727px;top:619.5000000000003px;width:4px;height:15.1px;background:#2e2e2e;"></div>
<div style="left:727px;top:633.3000000000004px;width:343px;height:1.3px;background:#262626;"></div>
<div style="left:28px;top:626.5000000000003px;width:1px;height:1px;background:#555;"></div>
<svg style="position:absolute;left:38px;top:621.1000000000004px;" width="11" height="12" viewBox="0 0 11 12"><circle cx="5.5" cy="6.6" r="4.3" fill="none" stroke="#c8c8c8" stroke-width="1.3"/><path d="M3.6 0.9h3.8M5.5 0.9v1.5" stroke="#c8c8c8" stroke-width="1.3"/></svg>
<div style="left:55px;top:623.04px;font-size:10px;line-height:10px;color:#b4b4b4;font-weight:normal;font-family:'Liberation Sans', sans-serif;white-space:nowrap;">Anchor Point</div>
<div style="left:490px;top:622.54px;font-size:10px;line-height:10px;color:#3a8ee6;font-weight:normal;font-family:'Liberation Sans', sans-serif;white-space:nowrap;letter-spacing:-0.2px;">0.0<span style='position:relative;top:2px'>,</span>0.0</div>
<svg style="position:absolute;left:622px;top:621.0000000000003px;" width="12" height="12" viewBox="0 0 12 12"><path d="M9.9 2.6A4.9 4.9 0 1 1 6 1.3 3.2 3.2 0 0 1 8.9 5.8 2.1 2.1 0 0 1 5.3 6.9 1.2 1.2 0 0 1 6.3 5.2" fill="none" stroke="#c8c8c8" stroke-width="1.25"/></svg>
<div style="left:0px;top:634.6000000000004px;width:725px;height:15.1px;background:#232323;"></div>
<div style="left:0px;top:648.7000000000004px;width:725px;height:1px;background:#1a1a1a;"></div>
<div style="left:727px;top:634.6000000000004px;width:343px;height:15.1px;background:#333333;"></div>
<div style="left:727px;top:634.6000000000004px;width:4px;height:15.1px;background:#2e2e2e;"></div>
<div style="left:727px;top:648.4000000000004px;width:343px;height:1.3px;background:#262626;"></div>
<div style="left:28px;top:641.6000000000004px;width:1px;height:1px;background:#555;"></div>
<svg style="position:absolute;left:38px;top:636.2000000000004px;" width="11" height="12" viewBox="0 0 11 12"><circle cx="5.5" cy="6.6" r="4.3" fill="none" stroke="#c8c8c8" stroke-width="1.3"/><path d="M3.6 0.9h3.8M5.5 0.9v1.5" stroke="#c8c8c8" stroke-width="1.3"/></svg>
<div style="left:55px;top:638.14px;font-size:10px;line-height:10px;color:#b4b4b4;font-weight:normal;font-family:'Liberation Sans', sans-serif;white-space:nowrap;">Position</div>
<div style="left:490px;top:637.64px;font-size:10px;line-height:10px;color:#3a8ee6;font-weight:normal;font-family:'Liberation Sans', sans-serif;white-space:nowrap;letter-spacing:-0.2px;">1372.0<span style='position:relative;top:2px'>,</span>446.0</div>
<svg style="position:absolute;left:622px;top:636.1000000000004px;" width="12" height="12" viewBox="0 0 12 12"><path d="M9.9 2.6A4.9 4.9 0 1 1 6 1.3 3.2 3.2 0 0 1 8.9 5.8 2.1 2.1 0 0 1 5.3 6.9 1.2 1.2 0 0 1 6.3 5.2" fill="none" stroke="#c8c8c8" stroke-width="1.25"/></svg>
<div style="left:0px;top:649.7000000000004px;width:725px;height:15.1px;background:#232323;"></div>
<div style="left:0px;top:663.8000000000004px;width:725px;height:1px;background:#1a1a1a;"></div>
<div style="left:727px;top:649.7000000000004px;width:343px;height:15.1px;background:#333333;"></div>
<div style="left:727px;top:649.7000000000004px;width:4px;height:15.1px;background:#2e2e2e;"></div>
<div style="left:727px;top:663.5000000000005px;width:343px;height:1.3px;background:#262626;"></div>
<div style="left:28px;top:656.7000000000004px;width:1px;height:1px;background:#555;"></div>
<svg style="position:absolute;left:38px;top:651.3000000000004px;" width="11" height="12" viewBox="0 0 11 12"><circle cx="5.5" cy="6.6" r="4.3" fill="none" stroke="#c8c8c8" stroke-width="1.3"/><path d="M3.6 0.9h3.8M5.5 0.9v1.5" stroke="#c8c8c8" stroke-width="1.3"/></svg>
<div style="left:55px;top:653.24px;font-size:10px;line-height:10px;color:#b4b4b4;font-weight:normal;font-family:'Liberation Sans', sans-serif;white-space:nowrap;">Scale</div>
<div style="left:488px;top:650.7000000000004px;width:12.5px;height:13px;background:#1a1a1a;"></div>
<svg style="position:absolute;left:489px;top:653.7000000000004px;" width="11" height="7" viewBox="0 0 11 7"><rect x="0.6" y="1" width="5.5" height="4.5" rx="2.2" fill="none" stroke="#d0d0d0" stroke-width="1.2"/><rect x="4.8" y="1" width="5.5" height="4.5" rx="2.2" fill="none" stroke="#d0d0d0" stroke-width="1.2"/></svg>
<div style="left:505px;top:652.74px;font-size:10px;line-height:10px;color:#3a8ee6;font-weight:normal;font-family:'Liberation Sans', sans-serif;white-space:nowrap;letter-spacing:-0.2px;">100.0<span style='position:relative;top:2px'>,</span>100.0<span style='color:#a0a0a0'> %</span></div>
<svg style="position:absolute;left:622px;top:651.2000000000004px;" width="12" height="12" viewBox="0 0 12 12"><path d="M9.9 2.6A4.9 4.9 0 1 1 6 1.3 3.2 3.2 0 0 1 8.9 5.8 2.1 2.1 0 0 1 5.3 6.9 1.2 1.2 0 0 1 6.3 5.2" fill="none" stroke="#c8c8c8" stroke-width="1.25"/></svg>
<div style="left:0px;top:664.8000000000004px;width:725px;height:15.1px;background:#232323;"></div>
<div style="left:0px;top:678.9000000000004px;width:725px;height:1px;background:#1a1a1a;"></div>
<div style="left:727px;top:664.8000000000004px;width:343px;height:15.1px;background:#333333;"></div>
<div style="left:727px;top:664.8000000000004px;width:4px;height:15.1px;background:#2e2e2e;"></div>
<div style="left:727px;top:678.6000000000005px;width:343px;height:1.3px;background:#262626;"></div>
<svg style="position:absolute;left:38px;top:666.4000000000004px;" width="11" height="12" viewBox="0 0 11 12"><circle cx="5.5" cy="6.6" r="4.3" fill="none" stroke="#c8c8c8" stroke-width="1.3"/><path d="M3.6 0.9h3.8M5.5 0.9v1.5" stroke="#c8c8c8" stroke-width="1.3"/></svg>
<div style="left:776px;top:314.4px;width:294px;height:14px;background:#7a3a3b;"></div>
<div style="left:776px;top:329.5px;width:294px;height:14px;background:#936828;"></div>
<div style="left:776px;top:344.6px;width:294px;height:14px;background:#936828;"></div>
<div style="left:776px;top:359.70000000000005px;width:294px;height:14px;background:#dd9c2c;"></div>
<div style="left:776px;top:359.70000000000005px;width:294px;height:1px;background:#f0c070;"></div>
<div style="left:776px;top:359.70000000000005px;width:1px;height:14px;background:#f5d090;"></div>
<div style="left:776px;top:374.80000000000007px;width:294px;height:14px;background:#dd9c2c;"></div>
<div style="left:776px;top:374.80000000000007px;width:294px;height:1px;background:#f0c070;"></div>
<div style="left:776px;top:374.80000000000007px;width:1px;height:14px;background:#f5d090;"></div>
<div style="left:776px;top:389.9000000000001px;width:294px;height:14px;background:#dd9c2c;"></div>
<div style="left:776px;top:389.9000000000001px;width:294px;height:1px;background:#f0c070;"></div>
<div style="left:776px;top:389.9000000000001px;width:1px;height:14px;background:#f5d090;"></div>
<div style="left:776px;top:544.0000000000002px;width:294px;height:14px;background:#dd9c2c;"></div>
<div style="left:776px;top:544.0000000000002px;width:294px;height:1px;background:#f0c070;"></div>
<div style="left:776px;top:544.0000000000002px;width:1px;height:14px;background:#f5d090;"></div>
<div style="left:776px;top:559.1000000000003px;width:294px;height:14px;background:#dd9c2c;"></div>
<div style="left:776px;top:559.1000000000003px;width:294px;height:1px;background:#f0c070;"></div>
<div style="left:776px;top:559.1000000000003px;width:1px;height:14px;background:#f5d090;"></div>
<div style="left:776px;top:574.2000000000003px;width:294px;height:14px;background:#936828;"></div>
<div style="left:776px;top:589.3000000000003px;width:294px;height:14px;background:#936828;"></div>
<div style="left:724px;top:260px;width:2.2px;height:407px;background:#0f0f0f;"></div>
</body></html>
